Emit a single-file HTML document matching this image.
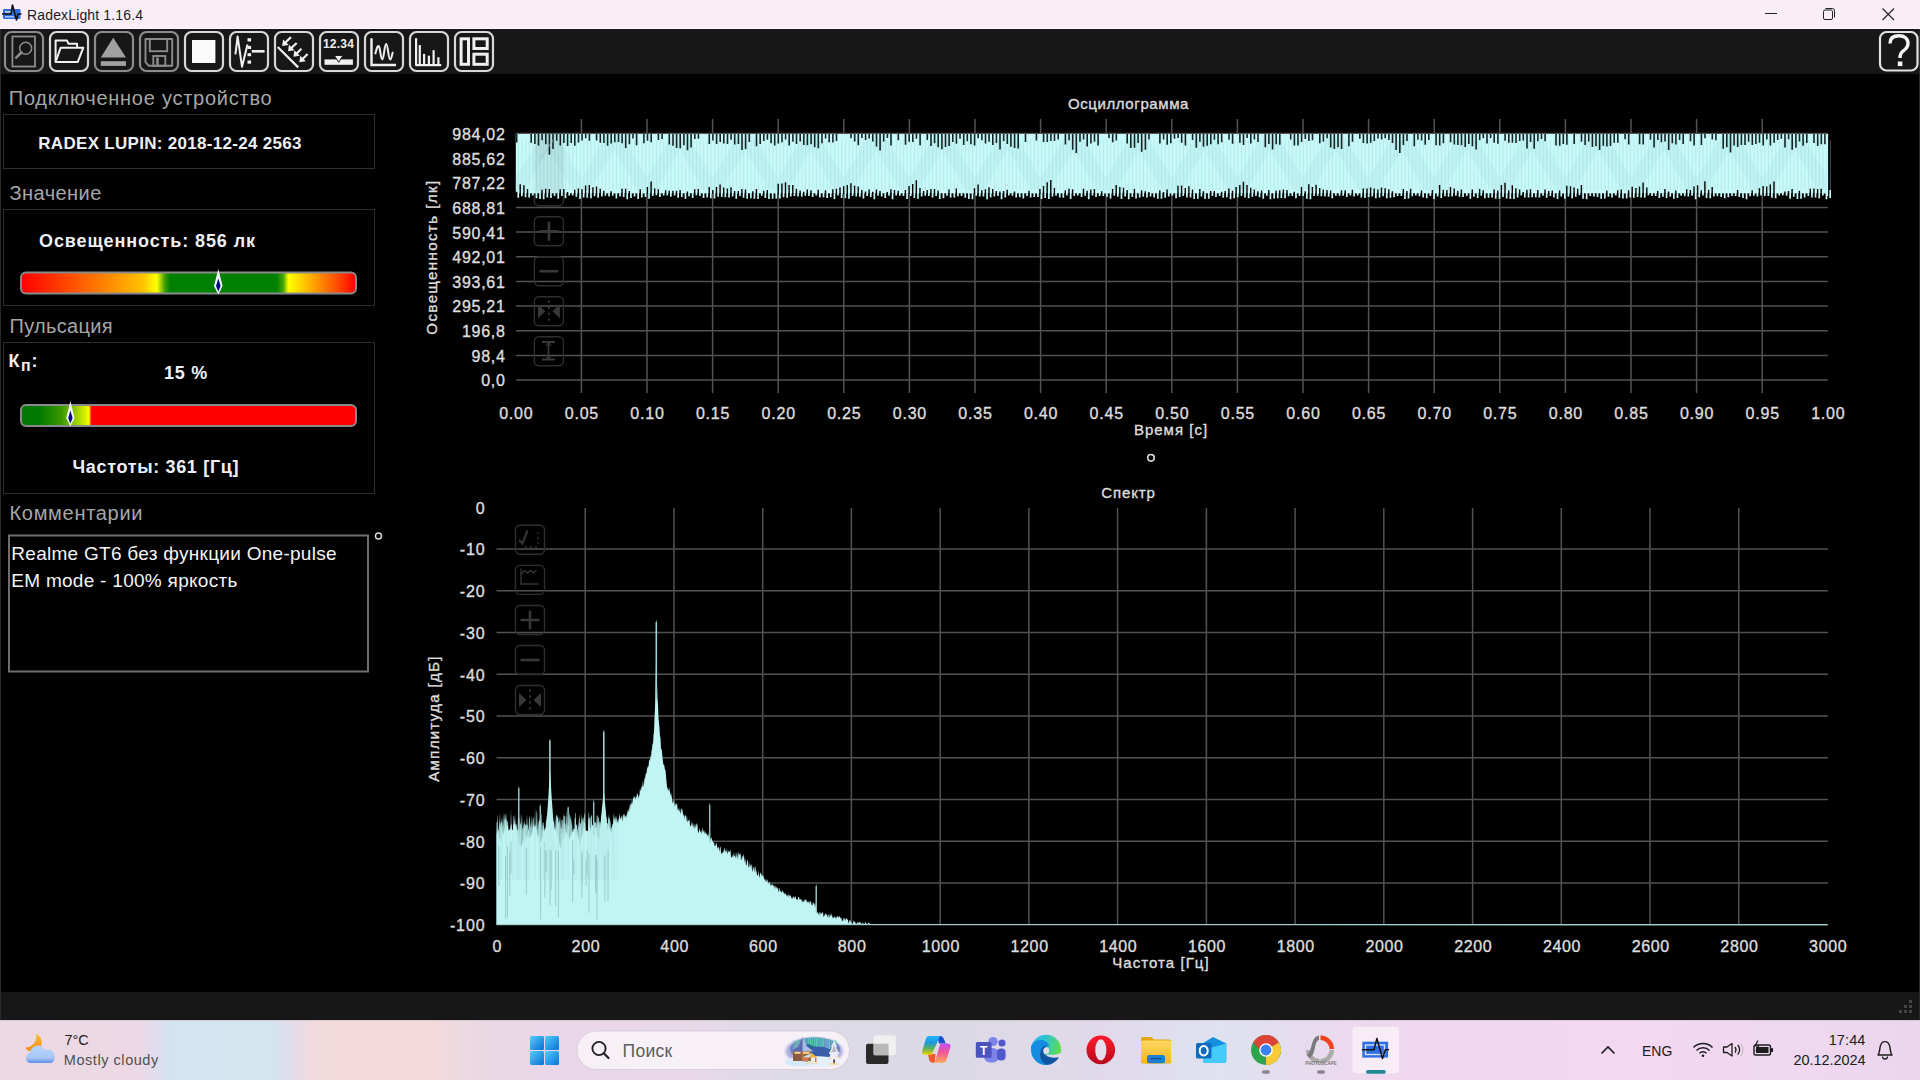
<!DOCTYPE html><html><head><meta charset="utf-8"><style>
html,body{margin:0;padding:0;width:1920px;height:1080px;overflow:hidden;background:#000;}
body{font-family:"Liberation Sans", sans-serif;position:relative;}
.a{position:absolute;}
svg text{font-family:"Liberation Sans",sans-serif;}
</style></head><body>
<div class="a" style="left:0;top:0;width:1920px;height:29px;background:#f9eef6;"></div>
<div class="a" style="left:0;top:28px;width:1920px;height:1px;background:#fdf7fb;"></div>
<div class="a" style="left:0;top:29px;width:1920px;height:45px;background:#171717;"></div>
<div class="a" style="left:0;top:992px;width:1920px;height:28px;background:#171717;"></div>
<div class="a" style="left:0;top:29px;width:1px;height:991px;background:#2a2a2a;"></div>
<div class="a" style="left:1919px;top:29px;width:1px;height:991px;background:#2a2a2a;"></div>
<svg class="a" style="left:0;top:0" width="1920" height="1080" viewBox="0 0 1920 1080">
<rect x="3" y="9" width="17.5" height="10" rx="1" fill="#2f6ee0"/>
<rect x="5" y="11" width="7" height="2" fill="#a8c4f5"/><rect x="5" y="16" width="9" height="1.5" fill="#a8c4f5"/>
<polyline points="2,14 11,14 12.5,5 16.5,20 18,14 21.5,14" fill="none" stroke="#111" stroke-width="1.6" stroke-linejoin="round"/>
<text x="27" y="19.5" font-size="14" fill="#1b1b1b" font-weight="normal" letter-spacing="0.15" text-anchor="start" >RadexLight 1.16.4</text>
<line x1="1765" y1="13.5" x2="1777" y2="13.5" stroke="#222" stroke-width="1"/>
<rect x="1823.5" y="10" width="9" height="9.5" rx="1.5" fill="none" stroke="#222" stroke-width="1"/>
<path d="M1825.5,8.5 h7 a2,2 0 0 1 2,2 v7" fill="none" stroke="#222" stroke-width="1"/>
<path d="M1882.5,8.5 L1894,20 M1894,8.5 L1882.5,20" stroke="#222" stroke-width="1.1"/>
<g transform="translate(4,31)"><rect x="1" y="1" width="38" height="39" rx="6.5" fill="#171717" stroke="#8c8c8c" stroke-width="2.2"/><rect x="8.4" y="5.5" width="22.6" height="30" fill="none" stroke="#8c8c8c" stroke-width="1.8"/><circle cx="21.7" cy="17.2" r="6" fill="none" stroke="#8c8c8c" stroke-width="1.5"/><line x1="17.4" y1="21.5" x2="12.2" y2="26.7" stroke="#8c8c8c" stroke-width="2.6" stroke-linecap="round"/></g>
<g transform="translate(49,31)"><rect x="1" y="1" width="38" height="39" rx="6.5" fill="#171717" stroke="#d8d8d8" stroke-width="2.2"/><path d="M6.6,30.9 V9.4 H17.9 L19.5,12.7 H28.1 V16.7" fill="none" stroke="#f2f2f2" stroke-width="2" stroke-linejoin="round"/><path d="M11.7,16.7 H34.3 L28.8,30.9 H6.6 Z" fill="none" stroke="#f2f2f2" stroke-width="2" stroke-linejoin="round"/></g>
<g transform="translate(94,31)"><rect x="1" y="1" width="38" height="39" rx="6.5" fill="#171717" stroke="#8c8c8c" stroke-width="2.2"/><path d="M19.2,6.8 L32,26.5 H6.8 Z" fill="#a0a0a0"/><rect x="6.8" y="30.2" width="25.2" height="4.7" fill="#a0a0a0"/></g>
<g transform="translate(139,31)"><rect x="1" y="1" width="38" height="39" rx="6.5" fill="#171717" stroke="#8c8c8c" stroke-width="2.2"/><path d="M6.5,8 H33.2 V34.8 H9.8 L6.5,31.2 Z" fill="none" stroke="#8c8c8c" stroke-width="1.9" stroke-linejoin="round"/><rect x="10.8" y="8" width="17.4" height="12.2" fill="none" stroke="#8c8c8c" stroke-width="1.9"/><rect x="14.3" y="25" width="12" height="9.8" fill="none" stroke="#8c8c8c" stroke-width="1.9"/><rect x="17.2" y="26.5" width="2.6" height="8" fill="#8c8c8c"/></g>
<g transform="translate(184,31)"><rect x="1" y="1" width="38" height="39" rx="6.5" fill="#171717" stroke="#d8d8d8" stroke-width="2.2"/><rect x="8" y="9" width="23.4" height="23" fill="#fafafa"/></g>
<g transform="translate(229,31)"><rect x="1" y="1" width="38" height="39" rx="6.5" fill="#171717" stroke="#d8d8d8" stroke-width="2.2"/><polyline points="6.4,23.3 8.6,5.5 13,35.7 18.5,13.4" fill="none" stroke="#f0f0f0" stroke-width="2" stroke-linejoin="round"/><rect x="18.5" y="7.2" width="3.6" height="3.3" fill="#f0f0f0"/><rect x="18.5" y="14.9" width="3.6" height="3.1" fill="#f0f0f0"/><rect x="18.5" y="22.2" width="3.6" height="3" fill="#f0f0f0"/><rect x="18.5" y="29.5" width="3.6" height="3.2" fill="#f0f0f0"/><rect x="22.8" y="19" width="12.8" height="2.6" fill="#f0f0f0"/></g>
<g transform="translate(274,31)"><rect x="1" y="1" width="38" height="39" rx="6.5" fill="#171717" stroke="#d8d8d8" stroke-width="2.2"/><line x1="3.7" y1="16" x2="24.2" y2="36.4" stroke="#f0f0f0" stroke-width="2.2"/><line x1="16.9" y1="6.1" x2="10.6" y2="12.4" stroke="#f0f0f0" stroke-width="2.2"/><path d="M8.1,14.9 L9.1,8.4 L14.6,13.9 Z" fill="#f0f0f0"/><line x1="22.7" y1="12" x2="16.5" y2="17.8" stroke="#f0f0f0" stroke-width="2.2"/><path d="M14,20.3 L15,13.8 L20.5,19.3 Z" fill="#f0f0f0"/><line x1="27.4" y1="17.8" x2="21.9" y2="23.3" stroke="#f0f0f0" stroke-width="2.2"/><path d="M19.4,25.8 L20.4,19.3 L25.9,24.8 Z" fill="#f0f0f0"/><line x1="33.6" y1="22.9" x2="27.8" y2="28.8" stroke="#f0f0f0" stroke-width="2.2"/><path d="M25.3,31.3 L26.3,24.8 L31.8,30.3 Z" fill="#f0f0f0"/></g>
<g transform="translate(319,31)"><rect x="1" y="1" width="38" height="39" rx="6.5" fill="#171717" stroke="#d8d8d8" stroke-width="2.2"/><text x="19.5" y="16.7" font-size="12" font-weight="bold" fill="#f0f0f0" text-anchor="middle" letter-spacing="0.2">12.34</text><rect x="5.5" y="28.4" width="28.4" height="5.4" fill="#f0f0f0"/><path d="M15.3,24.4 H24 L19.7,31.3 Z" fill="#f0f0f0" stroke="#171717" stroke-width="1"/></g>
<g transform="translate(364,31)"><rect x="1" y="1" width="38" height="39" rx="6.5" fill="#171717" stroke="#d8d8d8" stroke-width="2.2"/><polyline points="7.5,7.2 7.5,34 32,34" fill="none" stroke="#f0f0f0" stroke-width="2.4"/><path d="M11.2,23.3 C12.5,18 13.5,14 14.8,15.2 C16.5,17 16.5,28.4 18.3,28.4 C20,28.4 20.3,13 22.2,13 C24,13 24.3,28.4 26.1,28.4 C27.5,28.4 28,23 29,21" fill="none" stroke="#f0f0f0" stroke-width="2"/></g>
<g transform="translate(409,31)"><rect x="1" y="1" width="38" height="39" rx="6.5" fill="#171717" stroke="#d8d8d8" stroke-width="2.2"/><rect x="6" y="7.2" width="2.2" height="27.000000000000004" fill="#f0f0f0"/><rect x="9.7" y="14.1" width="2.2" height="20.1" fill="#f0f0f0"/><rect x="14" y="22.9" width="2.2" height="11.300000000000004" fill="#f0f0f0"/><rect x="18.8" y="24.7" width="2.2" height="9.500000000000004" fill="#f0f0f0"/><rect x="23.5" y="19.2" width="2.2" height="15.000000000000004" fill="#f0f0f0"/><rect x="28.3" y="26.2" width="2.2" height="8.000000000000004" fill="#f0f0f0"/><rect x="6.3" y="33" width="25.9" height="2.2" fill="#f0f0f0"/></g>
<g transform="translate(454,31)"><rect x="1" y="1" width="38" height="39" rx="6.5" fill="#171717" stroke="#d8d8d8" stroke-width="2.2"/><rect x="7.1" y="7.8" width="7.4" height="25.5" fill="none" stroke="#f0f0f0" stroke-width="3"/><rect x="19.9" y="7.8" width="13.3" height="9.7" fill="none" stroke="#f0f0f0" stroke-width="3"/><rect x="19.9" y="23.2" width="13.3" height="10.1" fill="none" stroke="#f0f0f0" stroke-width="3"/></g>
<g transform="translate(1879,31)"><rect x="1" y="1" width="37.5" height="38.5" rx="6.5" fill="#171717" stroke="#e0e0e0" stroke-width="2.2"/><path d="M11,12.5 C11,6.5 15,4.8 20,4.8 C25.5,4.8 29,7.8 29,12.5 C29,17 25.5,19 23.5,20.5 C21.5,22 21,23.5 21,27" fill="none" stroke="#f4f4f4" stroke-width="3.4"/><rect x="18.8" y="30.5" width="4.6" height="4.6" fill="#f4f4f4"/></g>
<text x="8.8" y="105" font-size="20" fill="#a6a6a6" font-weight="normal" letter-spacing="0.75" text-anchor="start" >Подключенное устройство</text>
<rect x="3.5" y="114.5" width="371" height="54" fill="none" stroke="#2e2e2e" stroke-width="1"/>
<text x="38.3" y="149" font-size="17" fill="#eef0f6" font-weight="bold" letter-spacing="0.3" text-anchor="start" >RADEX LUPIN: 2018-12-24 2563</text>
<text x="9.5" y="200" font-size="20" fill="#a6a6a6" font-weight="normal" letter-spacing="0.45" text-anchor="start" >Значение</text>
<rect x="3.5" y="209.5" width="371" height="96" fill="none" stroke="#2e2e2e" stroke-width="1"/>
<text x="39" y="247.3" font-size="18" fill="#eef0f6" font-weight="bold" letter-spacing="0.9" text-anchor="start" >Освещенность: 856 лк</text>
<defs><linearGradient id="g1" x1="22" x2="355" gradientUnits="userSpaceOnUse"><stop offset="0" stop-color="#ff0000"/><stop offset="0.2" stop-color="#ff6a00"/><stop offset="0.36" stop-color="#ffc000"/><stop offset="0.405" stop-color="#ffff00"/><stop offset="0.43" stop-color="#3a9a00"/><stop offset="0.445" stop-color="#008000"/><stop offset="0.765" stop-color="#008000"/><stop offset="0.785" stop-color="#4aa800"/><stop offset="0.8" stop-color="#ffff00"/><stop offset="0.84" stop-color="#ffd000"/><stop offset="0.96" stop-color="#ff3a00"/><stop offset="1" stop-color="#ff0000"/></linearGradient><linearGradient id="g2" x1="22" x2="355" gradientUnits="userSpaceOnUse"><stop offset="0" stop-color="#007800"/><stop offset="0.05" stop-color="#007800"/><stop offset="0.12" stop-color="#3c9a00"/><stop offset="0.19" stop-color="#d8f000"/><stop offset="0.201" stop-color="#ffff00"/><stop offset="0.205" stop-color="#ff8000"/><stop offset="0.209" stop-color="#ff0000"/><stop offset="1" stop-color="#ff0000"/></linearGradient></defs>
<rect x="21" y="272.5" width="335" height="21" rx="5" fill="url(#g1)" stroke="#8a8a8a" stroke-width="2"/>
<path d="M218.3,269 L222.6,286 L218.3,294.5 L214,286 Z" fill="#f4f4ff" /><path d="M218.3,278.5 L220.6,286 L218.3,291.5 L216,286 Z" fill="#000a80"/>
<text x="9.5" y="332.8" font-size="20" fill="#a6a6a6" font-weight="normal" letter-spacing="0.3" text-anchor="start" >Пульсация</text>
<rect x="3.5" y="342.5" width="371" height="151" fill="none" stroke="#2e2e2e" stroke-width="1"/>
<text x="8.5" y="367.3" font-size="18" fill="#eef0f6" font-weight="bold" letter-spacing="0" text-anchor="start" >К</text>
<text x="21" y="371.3" font-size="16" fill="#eef0f6" font-weight="bold" letter-spacing="0" text-anchor="start" >п</text>
<text x="31.5" y="367.3" font-size="18" fill="#eef0f6" font-weight="bold" letter-spacing="0" text-anchor="start" >:</text>
<text x="164" y="379.3" font-size="18" fill="#eef0f6" font-weight="bold" letter-spacing="0.75" text-anchor="start" >15 %</text>
<rect x="21" y="405" width="335" height="21" rx="5" fill="url(#g2)" stroke="#8a8a8a" stroke-width="2"/>
<path d="M70.4,401 L74.6,418 L70.4,426.5 L66.2,418 Z" fill="#f4f4ff" /><path d="M70.4,410.5 L72.6,418 L70.4,423.5 L68.2,418 Z" fill="#000a80"/>
<text x="72.5" y="472.8" font-size="18" fill="#eef0f6" font-weight="bold" letter-spacing="0.67" text-anchor="start" >Частоты: 361 [Гц]</text>
<text x="9.5" y="520" font-size="20" fill="#a6a6a6" font-weight="normal" letter-spacing="0.7" text-anchor="start" >Комментарии</text>
<rect x="9" y="535.5" width="359" height="136" fill="none" stroke="#6e6e6e" stroke-width="2"/>
<text x="11.3" y="559.5" font-size="19" fill="#f4f4f4" font-weight="normal" letter-spacing="0.28" text-anchor="start" >Realme GT6 без функции One-pulse</text>
<text x="11.3" y="587" font-size="19" fill="#f4f4f4" font-weight="normal" letter-spacing="0.28" text-anchor="start" >EM mode - 100% яркость</text>
<circle cx="378.5" cy="536" r="3" fill="none" stroke="#d8d8d8" stroke-width="1.5"/>
<text x="1128.5" y="108.8" font-size="15" fill="#dedede" font-weight="normal" letter-spacing="0.6" text-anchor="middle"  stroke="#dedede" stroke-width="0.35">Осциллограмма</text>
<line x1="515.8" y1="380.0" x2="1827.8" y2="380.0" stroke="#525252" stroke-width="1.5"/><line x1="515.8" y1="355.4" x2="1827.8" y2="355.4" stroke="#525252" stroke-width="1.5"/><line x1="515.8" y1="330.7" x2="1827.8" y2="330.7" stroke="#525252" stroke-width="1.5"/><line x1="515.8" y1="306.1" x2="1827.8" y2="306.1" stroke="#525252" stroke-width="1.5"/><line x1="515.8" y1="281.4" x2="1827.8" y2="281.4" stroke="#525252" stroke-width="1.5"/><line x1="515.8" y1="256.8" x2="1827.8" y2="256.8" stroke="#525252" stroke-width="1.5"/><line x1="515.8" y1="232.1" x2="1827.8" y2="232.1" stroke="#525252" stroke-width="1.5"/><line x1="515.8" y1="207.4" x2="1827.8" y2="207.4" stroke="#525252" stroke-width="1.5"/><line x1="515.8" y1="182.8" x2="1827.8" y2="182.8" stroke="#525252" stroke-width="1.5"/><line x1="515.8" y1="158.2" x2="1827.8" y2="158.2" stroke="#525252" stroke-width="1.5"/><line x1="515.8" y1="133.5" x2="1827.8" y2="133.5" stroke="#525252" stroke-width="1.5"/><line x1="581.4" y1="119" x2="581.4" y2="393" stroke="#525252" stroke-width="1.5"/><line x1="647.0" y1="119" x2="647.0" y2="393" stroke="#525252" stroke-width="1.5"/><line x1="712.6" y1="119" x2="712.6" y2="393" stroke="#525252" stroke-width="1.5"/><line x1="778.2" y1="119" x2="778.2" y2="393" stroke="#525252" stroke-width="1.5"/><line x1="843.8" y1="119" x2="843.8" y2="393" stroke="#525252" stroke-width="1.5"/><line x1="909.4" y1="119" x2="909.4" y2="393" stroke="#525252" stroke-width="1.5"/><line x1="975.0" y1="119" x2="975.0" y2="393" stroke="#525252" stroke-width="1.5"/><line x1="1040.6" y1="119" x2="1040.6" y2="393" stroke="#525252" stroke-width="1.5"/><line x1="1106.2" y1="119" x2="1106.2" y2="393" stroke="#525252" stroke-width="1.5"/><line x1="1171.8" y1="119" x2="1171.8" y2="393" stroke="#525252" stroke-width="1.5"/><line x1="1237.4" y1="119" x2="1237.4" y2="393" stroke="#525252" stroke-width="1.5"/><line x1="1303.0" y1="119" x2="1303.0" y2="393" stroke="#525252" stroke-width="1.5"/><line x1="1368.6" y1="119" x2="1368.6" y2="393" stroke="#525252" stroke-width="1.5"/><line x1="1434.2" y1="119" x2="1434.2" y2="393" stroke="#525252" stroke-width="1.5"/><line x1="1499.8" y1="119" x2="1499.8" y2="393" stroke="#525252" stroke-width="1.5"/><line x1="1565.4" y1="119" x2="1565.4" y2="393" stroke="#525252" stroke-width="1.5"/><line x1="1631.0" y1="119" x2="1631.0" y2="393" stroke="#525252" stroke-width="1.5"/><line x1="1696.6" y1="119" x2="1696.6" y2="393" stroke="#525252" stroke-width="1.5"/><line x1="1762.2" y1="119" x2="1762.2" y2="393" stroke="#525252" stroke-width="1.5"/>
<text x="505.5" y="386.4" font-size="16" fill="#dedede" font-weight="normal" letter-spacing="0.7" text-anchor="end"  stroke="#dedede" stroke-width="0.35">0,0</text>
<text x="505.5" y="361.75" font-size="16" fill="#dedede" font-weight="normal" letter-spacing="0.7" text-anchor="end"  stroke="#dedede" stroke-width="0.35">98,4</text>
<text x="505.5" y="337.09999999999997" font-size="16" fill="#dedede" font-weight="normal" letter-spacing="0.7" text-anchor="end"  stroke="#dedede" stroke-width="0.35">196,8</text>
<text x="505.5" y="312.45" font-size="16" fill="#dedede" font-weight="normal" letter-spacing="0.7" text-anchor="end"  stroke="#dedede" stroke-width="0.35">295,21</text>
<text x="505.5" y="287.79999999999995" font-size="16" fill="#dedede" font-weight="normal" letter-spacing="0.7" text-anchor="end"  stroke="#dedede" stroke-width="0.35">393,61</text>
<text x="505.5" y="263.15" font-size="16" fill="#dedede" font-weight="normal" letter-spacing="0.7" text-anchor="end"  stroke="#dedede" stroke-width="0.35">492,01</text>
<text x="505.5" y="238.5" font-size="16" fill="#dedede" font-weight="normal" letter-spacing="0.7" text-anchor="end"  stroke="#dedede" stroke-width="0.35">590,41</text>
<text x="505.5" y="213.85" font-size="16" fill="#dedede" font-weight="normal" letter-spacing="0.7" text-anchor="end"  stroke="#dedede" stroke-width="0.35">688,81</text>
<text x="505.5" y="189.20000000000002" font-size="16" fill="#dedede" font-weight="normal" letter-spacing="0.7" text-anchor="end"  stroke="#dedede" stroke-width="0.35">787,22</text>
<text x="505.5" y="164.55" font-size="16" fill="#dedede" font-weight="normal" letter-spacing="0.7" text-anchor="end"  stroke="#dedede" stroke-width="0.35">885,62</text>
<text x="505.5" y="139.9" font-size="16" fill="#dedede" font-weight="normal" letter-spacing="0.7" text-anchor="end"  stroke="#dedede" stroke-width="0.35">984,02</text>
<text x="516.3" y="418.75" font-size="16" fill="#dedede" font-weight="normal" letter-spacing="0.8" text-anchor="middle"  stroke="#dedede" stroke-width="0.35">0.00</text>
<text x="581.9" y="418.75" font-size="16" fill="#dedede" font-weight="normal" letter-spacing="0.8" text-anchor="middle"  stroke="#dedede" stroke-width="0.35">0.05</text>
<text x="647.5" y="418.75" font-size="16" fill="#dedede" font-weight="normal" letter-spacing="0.8" text-anchor="middle"  stroke="#dedede" stroke-width="0.35">0.10</text>
<text x="713.0999999999999" y="418.75" font-size="16" fill="#dedede" font-weight="normal" letter-spacing="0.8" text-anchor="middle"  stroke="#dedede" stroke-width="0.35">0.15</text>
<text x="778.6999999999999" y="418.75" font-size="16" fill="#dedede" font-weight="normal" letter-spacing="0.8" text-anchor="middle"  stroke="#dedede" stroke-width="0.35">0.20</text>
<text x="844.3" y="418.75" font-size="16" fill="#dedede" font-weight="normal" letter-spacing="0.8" text-anchor="middle"  stroke="#dedede" stroke-width="0.35">0.25</text>
<text x="909.9" y="418.75" font-size="16" fill="#dedede" font-weight="normal" letter-spacing="0.8" text-anchor="middle"  stroke="#dedede" stroke-width="0.35">0.30</text>
<text x="975.5" y="418.75" font-size="16" fill="#dedede" font-weight="normal" letter-spacing="0.8" text-anchor="middle"  stroke="#dedede" stroke-width="0.35">0.35</text>
<text x="1041.1" y="418.75" font-size="16" fill="#dedede" font-weight="normal" letter-spacing="0.8" text-anchor="middle"  stroke="#dedede" stroke-width="0.35">0.40</text>
<text x="1106.6999999999998" y="418.75" font-size="16" fill="#dedede" font-weight="normal" letter-spacing="0.8" text-anchor="middle"  stroke="#dedede" stroke-width="0.35">0.45</text>
<text x="1172.3" y="418.75" font-size="16" fill="#dedede" font-weight="normal" letter-spacing="0.8" text-anchor="middle"  stroke="#dedede" stroke-width="0.35">0.50</text>
<text x="1237.9" y="418.75" font-size="16" fill="#dedede" font-weight="normal" letter-spacing="0.8" text-anchor="middle"  stroke="#dedede" stroke-width="0.35">0.55</text>
<text x="1303.5" y="418.75" font-size="16" fill="#dedede" font-weight="normal" letter-spacing="0.8" text-anchor="middle"  stroke="#dedede" stroke-width="0.35">0.60</text>
<text x="1369.1" y="418.75" font-size="16" fill="#dedede" font-weight="normal" letter-spacing="0.8" text-anchor="middle"  stroke="#dedede" stroke-width="0.35">0.65</text>
<text x="1434.6999999999998" y="418.75" font-size="16" fill="#dedede" font-weight="normal" letter-spacing="0.8" text-anchor="middle"  stroke="#dedede" stroke-width="0.35">0.70</text>
<text x="1500.3" y="418.75" font-size="16" fill="#dedede" font-weight="normal" letter-spacing="0.8" text-anchor="middle"  stroke="#dedede" stroke-width="0.35">0.75</text>
<text x="1565.8999999999999" y="418.75" font-size="16" fill="#dedede" font-weight="normal" letter-spacing="0.8" text-anchor="middle"  stroke="#dedede" stroke-width="0.35">0.80</text>
<text x="1631.5" y="418.75" font-size="16" fill="#dedede" font-weight="normal" letter-spacing="0.8" text-anchor="middle"  stroke="#dedede" stroke-width="0.35">0.85</text>
<text x="1697.1" y="418.75" font-size="16" fill="#dedede" font-weight="normal" letter-spacing="0.8" text-anchor="middle"  stroke="#dedede" stroke-width="0.35">0.90</text>
<text x="1762.7" y="418.75" font-size="16" fill="#dedede" font-weight="normal" letter-spacing="0.8" text-anchor="middle"  stroke="#dedede" stroke-width="0.35">0.95</text>
<text x="1828.3" y="418.75" font-size="16" fill="#dedede" font-weight="normal" letter-spacing="0.8" text-anchor="middle"  stroke="#dedede" stroke-width="0.35">1.00</text>
<text x="1171" y="435.3" font-size="15" fill="#dedede" font-weight="normal" letter-spacing="1.0" text-anchor="middle"  stroke="#dedede" stroke-width="0.35">Время [с]</text>
<text x="0" y="0" font-size="15" fill="#dedede" font-weight="normal" letter-spacing="1.45" text-anchor="middle" transform="translate(436.5,257) rotate(-90)" stroke="#dedede" stroke-width="0.35">Освещенность [лк]</text>
<circle cx="1151" cy="457.8" r="3.3" fill="none" stroke="#d8d8d8" stroke-width="1.6"/>
<rect x="534.4" y="176.7" width="29" height="29" rx="4.5" fill="none" stroke="#2e2e2e" stroke-width="1.4"/><rect x="534.4" y="216.7" width="29" height="29" rx="4.5" fill="none" stroke="#2e2e2e" stroke-width="1.4"/><rect x="534.4" y="256.7" width="29" height="29" rx="4.5" fill="none" stroke="#2e2e2e" stroke-width="1.4"/><rect x="534.4" y="296.7" width="29" height="29" rx="4.5" fill="none" stroke="#2e2e2e" stroke-width="1.4"/><rect x="534.4" y="336.7" width="29" height="29" rx="4.5" fill="none" stroke="#2e2e2e" stroke-width="1.4"/>
<path d="M539.4,231.2 h19 M548.9,221.7 v19" stroke="#383838" stroke-width="2.6"/><path d="M539.4,271.2 h19" stroke="#383838" stroke-width="2.6"/><path d="M537.9,304.2 L545.4,311.2 L537.9,318.2 Z M559.9,304.2 L552.4,311.2 L559.9,318.2 Z" fill="#383838"/><rect x="547.9" y="300.7" width="2" height="2" fill="#383838"/><rect x="547.9" y="306.7" width="2" height="2" fill="#383838"/><rect x="547.9" y="312.7" width="2" height="2" fill="#383838"/><rect x="547.9" y="318.7" width="2" height="2" fill="#383838"/>
<path d="M542,342 h13 M542,359.5 h13 M548.5,343 v16" stroke="#383838" stroke-width="1.8"/><path d="M546,346 l2.5,-3.5 l2.5,3.5 M546,355.5 l2.5,3.5 l2.5,-3.5" fill="none" stroke="#383838" stroke-width="1.2"/>
<rect x="515.8" y="134" width="1312" height="59.3" fill="#c8fafa"/>
<clipPath id="bandclip"><rect x="515.8" y="134" width="1312" height="60"/></clipPath>
<polyline points="515.8,192 548.6,136 581.4,192 614.2,136 647.0,192 679.8,136 712.6,192 745.4,136 778.2,192 811.0,136 843.8,192 876.6,136 909.4,192 942.2,136 975.0,192 1007.8,136 1040.6,192 1073.4,136 1106.2,192 1139.0,136 1171.8,192 1204.6,136 1237.4,192 1270.2,136 1303.0,192 1335.8,136 1368.6,192 1401.4,136 1434.2,192 1467.0,136 1499.8,192 1532.6,136 1565.4,192 1598.2,136 1631.0,192 1663.8,136 1696.6,192 1729.4,136 1762.2,192 1795.0,136 1827.8,192 1860.6,136 1893.4,192" fill="none" stroke="#a6dcdc" stroke-width="14" opacity="0.22" clip-path="url(#bandclip)"/>
<path d="M518.4,140v50M522.0,140v50M525.7,140v50M529.3,140v50M532.9,140v50M536.6,140v50M540.2,140v50M543.8,140v50M547.5,140v50M551.1,140v50M554.7,140v50M558.4,140v50M562.0,140v50M565.6,140v50M569.3,140v50M572.9,140v50M576.5,140v50M580.2,140v50M583.8,140v50M587.4,140v50M591.1,140v50M594.7,140v50M598.3,140v50M602.0,140v50M605.6,140v50M609.2,140v50M612.9,140v50M616.5,140v50M620.2,140v50M623.8,140v50M627.4,140v50M631.1,140v50M634.7,140v50M638.3,140v50M642.0,140v50M645.6,140v50M649.2,140v50M652.9,140v50M656.5,140v50M660.1,140v50M663.8,140v50M667.4,140v50M671.0,140v50M674.7,140v50M678.3,140v50M681.9,140v50M685.6,140v50M689.2,140v50M692.8,140v50M696.5,140v50M700.1,140v50M703.7,140v50M707.4,140v50M711.0,140v50M714.6,140v50M718.3,140v50M721.9,140v50M725.5,140v50M729.2,140v50M732.8,140v50M736.4,140v50M740.1,140v50M743.7,140v50M747.3,140v50M751.0,140v50M754.6,140v50M758.2,140v50M761.9,140v50M765.5,140v50M769.1,140v50M772.8,140v50M776.4,140v50M780.0,140v50M783.7,140v50M787.3,140v50M790.9,140v50M794.6,140v50M798.2,140v50M801.9,140v50M805.5,140v50M809.1,140v50M812.8,140v50M816.4,140v50M820.0,140v50M823.7,140v50M827.3,140v50M830.9,140v50M834.6,140v50M838.2,140v50M841.8,140v50M845.5,140v50M849.1,140v50M852.7,140v50M856.4,140v50M860.0,140v50M863.6,140v50M867.3,140v50M870.9,140v50M874.5,140v50M878.2,140v50M881.8,140v50M885.4,140v50M889.1,140v50M892.7,140v50M896.3,140v50M900.0,140v50M903.6,140v50M907.2,140v50M910.9,140v50M914.5,140v50M918.1,140v50M921.8,140v50M925.4,140v50M929.0,140v50M932.7,140v50M936.3,140v50M939.9,140v50M943.6,140v50M947.2,140v50M950.8,140v50M954.5,140v50M958.1,140v50M961.7,140v50M965.4,140v50M969.0,140v50M972.6,140v50M976.3,140v50M979.9,140v50M983.6,140v50M987.2,140v50M990.8,140v50M994.5,140v50M998.1,140v50M1001.7,140v50M1005.4,140v50M1009.0,140v50M1012.6,140v50M1016.3,140v50M1019.9,140v50M1023.5,140v50M1027.2,140v50M1030.8,140v50M1034.4,140v50M1038.1,140v50M1041.7,140v50M1045.3,140v50M1049.0,140v50M1052.6,140v50M1056.2,140v50M1059.9,140v50M1063.5,140v50M1067.1,140v50M1070.8,140v50M1074.4,140v50M1078.0,140v50M1081.7,140v50M1085.3,140v50M1088.9,140v50M1092.6,140v50M1096.2,140v50M1099.8,140v50M1103.5,140v50M1107.1,140v50M1110.7,140v50M1114.4,140v50M1118.0,140v50M1121.6,140v50M1125.3,140v50M1128.9,140v50M1132.5,140v50M1136.2,140v50M1139.8,140v50M1143.4,140v50M1147.1,140v50M1150.7,140v50M1154.3,140v50M1158.0,140v50M1161.6,140v50M1165.3,140v50M1168.9,140v50M1172.5,140v50M1176.2,140v50M1179.8,140v50M1183.4,140v50M1187.1,140v50M1190.7,140v50M1194.3,140v50M1198.0,140v50M1201.6,140v50M1205.2,140v50M1208.9,140v50M1212.5,140v50M1216.1,140v50M1219.8,140v50M1223.4,140v50M1227.0,140v50M1230.7,140v50M1234.3,140v50M1237.9,140v50M1241.6,140v50M1245.2,140v50M1248.8,140v50M1252.5,140v50M1256.1,140v50M1259.7,140v50M1263.4,140v50M1267.0,140v50M1270.6,140v50M1274.3,140v50M1277.9,140v50M1281.5,140v50M1285.2,140v50M1288.8,140v50M1292.4,140v50M1296.1,140v50M1299.7,140v50M1303.3,140v50M1307.0,140v50M1310.6,140v50M1314.2,140v50M1317.9,140v50M1321.5,140v50M1325.1,140v50M1328.8,140v50M1332.4,140v50M1336.0,140v50M1339.7,140v50M1343.3,140v50M1347.0,140v50M1350.6,140v50M1354.2,140v50M1357.9,140v50M1361.5,140v50M1365.1,140v50M1368.8,140v50M1372.4,140v50M1376.0,140v50M1379.7,140v50M1383.3,140v50M1386.9,140v50M1390.6,140v50M1394.2,140v50M1397.8,140v50M1401.5,140v50M1405.1,140v50M1408.7,140v50M1412.4,140v50M1416.0,140v50M1419.6,140v50M1423.3,140v50M1426.9,140v50M1430.5,140v50M1434.2,140v50M1437.8,140v50M1441.4,140v50M1445.1,140v50M1448.7,140v50M1452.3,140v50M1456.0,140v50M1459.6,140v50M1463.2,140v50M1466.9,140v50M1470.5,140v50M1474.1,140v50M1477.8,140v50M1481.4,140v50M1485.0,140v50M1488.7,140v50M1492.3,140v50M1495.9,140v50M1499.6,140v50M1503.2,140v50M1506.8,140v50M1510.5,140v50M1514.1,140v50M1517.8,140v50M1521.4,140v50M1525.0,140v50M1528.7,140v50M1532.3,140v50M1535.9,140v50M1539.6,140v50M1543.2,140v50M1546.8,140v50M1550.5,140v50M1554.1,140v50M1557.7,140v50M1561.4,140v50M1565.0,140v50M1568.6,140v50M1572.3,140v50M1575.9,140v50M1579.5,140v50M1583.2,140v50M1586.8,140v50M1590.4,140v50M1594.1,140v50M1597.7,140v50M1601.3,140v50M1605.0,140v50M1608.6,140v50M1612.2,140v50M1615.9,140v50M1619.5,140v50M1623.1,140v50M1626.8,140v50M1630.4,140v50M1634.0,140v50M1637.7,140v50M1641.3,140v50M1644.9,140v50M1648.6,140v50M1652.2,140v50M1655.8,140v50M1659.5,140v50M1663.1,140v50M1666.7,140v50M1670.4,140v50M1674.0,140v50M1677.6,140v50M1681.3,140v50M1684.9,140v50M1688.5,140v50M1692.2,140v50M1695.8,140v50M1699.4,140v50M1703.1,140v50M1706.7,140v50M1710.4,140v50M1714.0,140v50M1717.6,140v50M1721.3,140v50M1724.9,140v50M1728.5,140v50M1732.2,140v50M1735.8,140v50M1739.4,140v50M1743.1,140v50M1746.7,140v50M1750.3,140v50M1754.0,140v50M1757.6,140v50M1761.2,140v50M1764.9,140v50M1768.5,140v50M1772.1,140v50M1775.8,140v50M1779.4,140v50M1783.0,140v50M1786.7,140v50M1790.3,140v50M1793.9,140v50M1797.6,140v50M1801.2,140v50M1804.8,140v50M1808.5,140v50M1812.1,140v50M1815.7,140v50M1819.4,140v50M1823.0,140v50M1826.6,140v50M1830.3,140v50" stroke="#9fd4d4" stroke-width="0.9" opacity="0.45"/>
<path d="M517.4,190h1.7v7.7h-1.7zM521.0,190h1.7v6.3h-1.7zM524.7,190h1.7v7.2h-1.7zM528.3,190h1.7v7.4h-1.7zM531.9,190h1.7v5.4h-1.7zM535.6,190h1.7v8.2h-1.7zM539.2,190h1.7v9.0h-1.7zM542.8,190h1.7v9.2h-1.7zM546.5,190h1.7v7.6h-1.7zM550.1,190h1.7v8.0h-1.7zM553.7,190h1.7v6.1h-1.7zM557.4,190h1.7v8.7h-1.7zM561.0,190h1.7v5.9h-1.7zM564.6,190h1.7v8.2h-1.7zM568.3,190h1.7v5.6h-1.7zM571.9,190h1.7v5.5h-1.7zM575.5,190h1.7v6.8h-1.7zM579.2,190h1.7v9.1h-1.7zM582.8,190h1.7v7.4h-1.7zM586.4,190h1.7v7.8h-1.7zM590.1,190h1.7v8.3h-1.7zM593.7,190h1.7v6.3h-1.7zM597.3,190h1.7v7.7h-1.7zM601.0,190h1.7v6.5h-1.7zM604.6,190h1.7v5.7h-1.7zM608.2,190h1.7v6.6h-1.7zM611.9,190h1.7v5.8h-1.7zM615.5,190h1.7v8.5h-1.7zM619.2,190h1.7v6.5h-1.7zM622.8,190h1.7v7.0h-1.7zM626.4,190h1.7v9.2h-1.7zM630.1,190h1.7v8.0h-1.7zM633.7,190h1.7v6.4h-1.7zM637.3,190h1.7v9.0h-1.7zM641.0,190h1.7v7.6h-1.7zM644.6,190h1.7v7.0h-1.7zM648.2,190h1.7v8.7h-1.7zM651.9,190h1.7v6.0h-1.7zM655.5,190h1.7v5.3h-1.7zM659.1,190h1.7v7.0h-1.7zM662.8,190h1.7v5.6h-1.7zM666.4,190h1.7v5.6h-1.7zM670.0,190h1.7v6.7h-1.7zM673.7,190h1.7v5.6h-1.7zM677.3,190h1.7v7.8h-1.7zM680.9,190h1.7v7.1h-1.7zM684.6,190h1.7v8.8h-1.7zM688.2,190h1.7v6.3h-1.7zM691.8,190h1.7v8.0h-1.7zM695.5,190h1.7v5.3h-1.7zM699.1,190h1.7v6.0h-1.7zM702.7,190h1.7v8.0h-1.7zM706.4,190h1.7v7.6h-1.7zM710.0,190h1.7v8.2h-1.7zM713.6,190h1.7v8.6h-1.7zM717.3,190h1.7v6.8h-1.7zM720.9,190h1.7v7.0h-1.7zM724.5,190h1.7v7.2h-1.7zM728.2,190h1.7v7.4h-1.7zM731.8,190h1.7v6.6h-1.7zM735.4,190h1.7v8.7h-1.7zM739.1,190h1.7v6.0h-1.7zM742.7,190h1.7v7.7h-1.7zM746.3,190h1.7v8.7h-1.7zM750.0,190h1.7v8.2h-1.7zM753.6,190h1.7v8.7h-1.7zM757.2,190h1.7v8.9h-1.7zM760.9,190h1.7v5.7h-1.7zM764.5,190h1.7v8.0h-1.7zM768.1,190h1.7v9.1h-1.7zM771.8,190h1.7v8.8h-1.7zM775.4,190h1.7v8.4h-1.7zM779.0,190h1.7v8.5h-1.7zM782.7,190h1.7v7.3h-1.7zM786.3,190h1.7v7.8h-1.7zM789.9,190h1.7v6.6h-1.7zM793.6,190h1.7v6.0h-1.7zM797.2,190h1.7v6.4h-1.7zM800.9,190h1.7v6.7h-1.7zM804.5,190h1.7v5.7h-1.7zM808.1,190h1.7v6.1h-1.7zM811.8,190h1.7v6.9h-1.7zM815.4,190h1.7v5.4h-1.7zM819.0,190h1.7v7.5h-1.7zM822.7,190h1.7v7.2h-1.7zM826.3,190h1.7v7.9h-1.7zM829.9,190h1.7v7.3h-1.7zM833.6,190h1.7v8.9h-1.7zM837.2,190h1.7v5.6h-1.7zM840.8,190h1.7v8.1h-1.7zM844.5,190h1.7v8.2h-1.7zM848.1,190h1.7v8.7h-1.7zM851.7,190h1.7v6.1h-1.7zM855.4,190h1.7v6.5h-1.7zM859.0,190h1.7v6.8h-1.7zM862.6,190h1.7v8.4h-1.7zM866.3,190h1.7v6.0h-1.7zM869.9,190h1.7v7.1h-1.7zM873.5,190h1.7v9.2h-1.7zM877.2,190h1.7v5.8h-1.7zM880.8,190h1.7v6.5h-1.7zM884.4,190h1.7v8.0h-1.7zM888.1,190h1.7v5.7h-1.7zM891.7,190h1.7v9.2h-1.7zM895.3,190h1.7v5.4h-1.7zM899.0,190h1.7v5.8h-1.7zM902.6,190h1.7v6.0h-1.7zM906.2,190h1.7v9.0h-1.7zM909.9,190h1.7v6.0h-1.7zM913.5,190h1.7v8.1h-1.7zM917.1,190h1.7v8.7h-1.7zM920.8,190h1.7v6.6h-1.7zM924.4,190h1.7v5.7h-1.7zM928.0,190h1.7v5.9h-1.7zM931.7,190h1.7v7.5h-1.7zM935.3,190h1.7v6.0h-1.7zM938.9,190h1.7v8.9h-1.7zM942.6,190h1.7v8.3h-1.7zM946.2,190h1.7v5.7h-1.7zM949.8,190h1.7v7.5h-1.7zM953.5,190h1.7v7.5h-1.7zM957.1,190h1.7v6.2h-1.7zM960.7,190h1.7v6.0h-1.7zM964.4,190h1.7v7.7h-1.7zM968.0,190h1.7v8.9h-1.7zM971.6,190h1.7v9.3h-1.7zM975.3,190h1.7v5.7h-1.7zM978.9,190h1.7v6.4h-1.7zM982.6,190h1.7v6.5h-1.7zM986.2,190h1.7v9.2h-1.7zM989.8,190h1.7v7.5h-1.7zM993.5,190h1.7v6.5h-1.7zM997.1,190h1.7v6.0h-1.7zM1000.7,190h1.7v9.2h-1.7zM1004.4,190h1.7v7.5h-1.7zM1008.0,190h1.7v5.5h-1.7zM1011.6,190h1.7v5.8h-1.7zM1015.3,190h1.7v7.5h-1.7zM1018.9,190h1.7v7.2h-1.7zM1022.5,190h1.7v8.6h-1.7zM1026.2,190h1.7v6.0h-1.7zM1029.8,190h1.7v7.5h-1.7zM1033.4,190h1.7v7.1h-1.7zM1037.1,190h1.7v6.9h-1.7zM1040.7,190h1.7v9.0h-1.7zM1044.3,190h1.7v8.1h-1.7zM1048.0,190h1.7v9.1h-1.7zM1051.6,190h1.7v6.6h-1.7zM1055.2,190h1.7v5.8h-1.7zM1058.9,190h1.7v7.4h-1.7zM1062.5,190h1.7v7.8h-1.7zM1066.1,190h1.7v5.6h-1.7zM1069.8,190h1.7v9.1h-1.7zM1073.4,190h1.7v5.9h-1.7zM1077.0,190h1.7v5.5h-1.7zM1080.7,190h1.7v6.9h-1.7zM1084.3,190h1.7v5.8h-1.7zM1087.9,190h1.7v9.2h-1.7zM1091.6,190h1.7v5.4h-1.7zM1095.2,190h1.7v7.1h-1.7zM1098.8,190h1.7v6.0h-1.7zM1102.5,190h1.7v6.0h-1.7zM1106.1,190h1.7v6.9h-1.7zM1109.7,190h1.7v8.5h-1.7zM1113.4,190h1.7v5.7h-1.7zM1117.0,190h1.7v6.8h-1.7zM1120.6,190h1.7v9.0h-1.7zM1124.3,190h1.7v6.4h-1.7zM1127.9,190h1.7v9.2h-1.7zM1131.5,190h1.7v7.1h-1.7zM1135.2,190h1.7v8.4h-1.7zM1138.8,190h1.7v7.5h-1.7zM1142.4,190h1.7v6.7h-1.7zM1146.1,190h1.7v7.6h-1.7zM1149.7,190h1.7v6.6h-1.7zM1153.3,190h1.7v7.4h-1.7zM1157.0,190h1.7v8.7h-1.7zM1160.6,190h1.7v8.8h-1.7zM1164.3,190h1.7v7.7h-1.7zM1167.9,190h1.7v6.4h-1.7zM1171.5,190h1.7v5.7h-1.7zM1175.2,190h1.7v8.3h-1.7zM1178.8,190h1.7v7.0h-1.7zM1182.4,190h1.7v6.1h-1.7zM1186.1,190h1.7v7.6h-1.7zM1189.7,190h1.7v7.5h-1.7zM1193.3,190h1.7v8.9h-1.7zM1197.0,190h1.7v8.7h-1.7zM1200.6,190h1.7v6.5h-1.7zM1204.2,190h1.7v9.0h-1.7zM1207.9,190h1.7v8.7h-1.7zM1211.5,190h1.7v6.0h-1.7zM1215.1,190h1.7v7.1h-1.7zM1218.8,190h1.7v6.0h-1.7zM1222.4,190h1.7v7.8h-1.7zM1226.0,190h1.7v7.3h-1.7zM1229.7,190h1.7v9.2h-1.7zM1233.3,190h1.7v8.2h-1.7zM1236.9,190h1.7v7.2h-1.7zM1240.6,190h1.7v6.1h-1.7zM1244.2,190h1.7v7.5h-1.7zM1247.8,190h1.7v8.2h-1.7zM1251.5,190h1.7v6.8h-1.7zM1255.1,190h1.7v6.1h-1.7zM1258.7,190h1.7v7.3h-1.7zM1262.4,190h1.7v8.8h-1.7zM1266.0,190h1.7v5.8h-1.7zM1269.6,190h1.7v9.2h-1.7zM1273.3,190h1.7v8.5h-1.7zM1276.9,190h1.7v8.3h-1.7zM1280.5,190h1.7v8.0h-1.7zM1284.2,190h1.7v8.3h-1.7zM1287.8,190h1.7v6.3h-1.7zM1291.4,190h1.7v6.1h-1.7zM1295.1,190h1.7v8.2h-1.7zM1298.7,190h1.7v5.9h-1.7zM1302.3,190h1.7v5.9h-1.7zM1306.0,190h1.7v8.8h-1.7zM1309.6,190h1.7v9.3h-1.7zM1313.2,190h1.7v6.0h-1.7zM1316.9,190h1.7v5.7h-1.7zM1320.5,190h1.7v6.2h-1.7zM1324.1,190h1.7v6.6h-1.7zM1327.8,190h1.7v6.7h-1.7zM1331.4,190h1.7v8.2h-1.7zM1335.0,190h1.7v5.7h-1.7zM1338.7,190h1.7v5.8h-1.7zM1342.3,190h1.7v5.8h-1.7zM1346.0,190h1.7v7.0h-1.7zM1349.6,190h1.7v5.5h-1.7zM1353.2,190h1.7v6.5h-1.7zM1356.9,190h1.7v5.5h-1.7zM1360.5,190h1.7v7.4h-1.7zM1364.1,190h1.7v8.0h-1.7zM1367.8,190h1.7v7.0h-1.7zM1371.4,190h1.7v6.5h-1.7zM1375.0,190h1.7v8.3h-1.7zM1378.7,190h1.7v7.6h-1.7zM1382.3,190h1.7v6.3h-1.7zM1385.9,190h1.7v8.3h-1.7zM1389.6,190h1.7v7.7h-1.7zM1393.2,190h1.7v7.3h-1.7zM1396.8,190h1.7v6.1h-1.7zM1400.5,190h1.7v5.9h-1.7zM1404.1,190h1.7v9.1h-1.7zM1407.7,190h1.7v8.6h-1.7zM1411.4,190h1.7v6.3h-1.7zM1415.0,190h1.7v5.6h-1.7zM1418.6,190h1.7v6.2h-1.7zM1422.3,190h1.7v7.5h-1.7zM1425.9,190h1.7v8.3h-1.7zM1429.5,190h1.7v5.9h-1.7zM1433.2,190h1.7v9.0h-1.7zM1436.8,190h1.7v6.5h-1.7zM1440.4,190h1.7v8.0h-1.7zM1444.1,190h1.7v6.3h-1.7zM1447.7,190h1.7v6.7h-1.7zM1451.3,190h1.7v6.6h-1.7zM1455.0,190h1.7v5.8h-1.7zM1458.6,190h1.7v6.8h-1.7zM1462.2,190h1.7v7.1h-1.7zM1465.9,190h1.7v6.0h-1.7zM1469.5,190h1.7v8.7h-1.7zM1473.1,190h1.7v6.8h-1.7zM1476.8,190h1.7v8.0h-1.7zM1480.4,190h1.7v5.7h-1.7zM1484.0,190h1.7v8.2h-1.7zM1487.7,190h1.7v7.8h-1.7zM1491.3,190h1.7v7.4h-1.7zM1494.9,190h1.7v8.7h-1.7zM1498.6,190h1.7v8.7h-1.7zM1502.2,190h1.7v7.1h-1.7zM1505.8,190h1.7v8.4h-1.7zM1509.5,190h1.7v9.1h-1.7zM1513.1,190h1.7v9.1h-1.7zM1516.8,190h1.7v7.4h-1.7zM1520.4,190h1.7v5.6h-1.7zM1524.0,190h1.7v7.5h-1.7zM1527.7,190h1.7v7.6h-1.7zM1531.3,190h1.7v7.3h-1.7zM1534.9,190h1.7v7.3h-1.7zM1538.6,190h1.7v7.5h-1.7zM1542.2,190h1.7v5.7h-1.7zM1545.8,190h1.7v7.8h-1.7zM1549.5,190h1.7v5.9h-1.7zM1553.1,190h1.7v7.6h-1.7zM1556.7,190h1.7v9.0h-1.7zM1560.4,190h1.7v6.5h-1.7zM1564.0,190h1.7v8.8h-1.7zM1567.6,190h1.7v6.4h-1.7zM1571.3,190h1.7v8.3h-1.7zM1574.9,190h1.7v6.8h-1.7zM1578.5,190h1.7v5.3h-1.7zM1582.2,190h1.7v8.8h-1.7zM1585.8,190h1.7v9.3h-1.7zM1589.4,190h1.7v6.1h-1.7zM1593.1,190h1.7v6.5h-1.7zM1596.7,190h1.7v7.0h-1.7zM1600.3,190h1.7v8.8h-1.7zM1604.0,190h1.7v8.6h-1.7zM1607.6,190h1.7v6.8h-1.7zM1611.2,190h1.7v7.6h-1.7zM1614.9,190h1.7v5.4h-1.7zM1618.5,190h1.7v7.8h-1.7zM1622.1,190h1.7v8.5h-1.7zM1625.8,190h1.7v8.4h-1.7zM1629.4,190h1.7v7.6h-1.7zM1633.0,190h1.7v7.8h-1.7zM1636.7,190h1.7v6.9h-1.7zM1640.3,190h1.7v7.5h-1.7zM1643.9,190h1.7v7.8h-1.7zM1647.6,190h1.7v5.3h-1.7zM1651.2,190h1.7v6.0h-1.7zM1654.8,190h1.7v6.1h-1.7zM1658.5,190h1.7v8.1h-1.7zM1662.1,190h1.7v6.7h-1.7zM1665.7,190h1.7v7.9h-1.7zM1669.4,190h1.7v6.7h-1.7zM1673.0,190h1.7v8.8h-1.7zM1676.6,190h1.7v8.1h-1.7zM1680.3,190h1.7v5.8h-1.7zM1683.9,190h1.7v6.2h-1.7zM1687.5,190h1.7v6.4h-1.7zM1691.2,190h1.7v5.8h-1.7zM1694.8,190h1.7v9.2h-1.7zM1698.4,190h1.7v7.2h-1.7zM1702.1,190h1.7v5.5h-1.7zM1705.7,190h1.7v8.1h-1.7zM1709.4,190h1.7v8.2h-1.7zM1713.0,190h1.7v6.6h-1.7zM1716.6,190h1.7v6.2h-1.7zM1720.3,190h1.7v6.9h-1.7zM1723.9,190h1.7v8.3h-1.7zM1727.5,190h1.7v7.2h-1.7zM1731.2,190h1.7v5.9h-1.7zM1734.8,190h1.7v6.0h-1.7zM1738.4,190h1.7v6.9h-1.7zM1742.1,190h1.7v8.1h-1.7zM1745.7,190h1.7v9.2h-1.7zM1749.3,190h1.7v6.2h-1.7zM1753.0,190h1.7v5.7h-1.7zM1756.6,190h1.7v6.5h-1.7zM1760.2,190h1.7v5.5h-1.7zM1763.9,190h1.7v5.9h-1.7zM1767.5,190h1.7v6.0h-1.7zM1771.1,190h1.7v7.8h-1.7zM1774.8,190h1.7v8.3h-1.7zM1778.4,190h1.7v5.6h-1.7zM1782.0,190h1.7v5.3h-1.7zM1785.7,190h1.7v5.8h-1.7zM1789.3,190h1.7v8.7h-1.7zM1792.9,190h1.7v6.7h-1.7zM1796.6,190h1.7v8.9h-1.7zM1800.2,190h1.7v8.8h-1.7zM1803.8,190h1.7v7.5h-1.7zM1807.5,190h1.7v6.1h-1.7zM1811.1,190h1.7v7.6h-1.7zM1814.7,190h1.7v7.6h-1.7zM1818.4,190h1.7v8.3h-1.7zM1822.0,190h1.7v5.5h-1.7zM1825.6,190h1.7v9.3h-1.7zM1829.3,190h1.7v8.1h-1.7z" fill="#c8fafa"/>
<path d="M515.9,191.7h1.4v2.3h-1.4zM519.5,184.2h1.4v9.8h-1.4zM523.2,185.2h1.4v8.8h-1.4zM526.8,189.1h1.4v4.9h-1.4zM541.3,189.8h1.4v4.2h-1.4zM545.0,188.8h1.4v5.2h-1.4zM548.6,189.0h1.4v5.0h-1.4zM559.5,189.3h1.4v4.7h-1.4zM563.1,188.9h1.4v5.1h-1.4zM566.8,191.9h1.4v2.1h-1.4zM574.0,189.8h1.4v4.2h-1.4zM577.7,188.4h1.4v5.6h-1.4zM581.3,189.3h1.4v4.7h-1.4zM584.9,185.5h1.4v8.5h-1.4zM588.6,185.0h1.4v9.0h-1.4zM592.2,187.2h1.4v6.8h-1.4zM595.8,186.5h1.4v7.5h-1.4zM599.5,188.7h1.4v5.3h-1.4zM603.1,190.7h1.4v3.3h-1.4zM610.4,191.3h1.4v2.7h-1.4zM621.3,188.8h1.4v5.2h-1.4zM624.9,188.7h1.4v5.3h-1.4zM628.6,191.0h1.4v3.0h-1.4zM639.5,189.3h1.4v4.7h-1.4zM646.7,187.1h1.4v6.9h-1.4zM650.4,181.5h1.4v12.5h-1.4zM654.0,188.5h1.4v5.5h-1.4zM657.6,189.3h1.4v4.7h-1.4zM664.9,190.2h1.4v3.8h-1.4zM668.5,190.8h1.4v3.2h-1.4zM672.2,190.7h1.4v3.3h-1.4zM675.8,190.7h1.4v3.3h-1.4zM679.4,190.1h1.4v3.9h-1.4zM686.7,191.6h1.4v2.4h-1.4zM694.0,189.3h1.4v4.7h-1.4zM697.6,189.1h1.4v4.9h-1.4zM708.5,186.9h1.4v7.1h-1.4zM712.1,189.9h1.4v4.1h-1.4zM715.8,187.0h1.4v7.0h-1.4zM719.4,184.5h1.4v9.5h-1.4zM723.0,187.6h1.4v6.4h-1.4zM726.7,188.4h1.4v5.6h-1.4zM730.3,187.3h1.4v6.7h-1.4zM733.9,191.0h1.4v3.0h-1.4zM737.6,190.9h1.4v3.1h-1.4zM741.2,189.1h1.4v4.9h-1.4zM744.8,189.4h1.4v4.6h-1.4zM752.1,191.3h1.4v2.7h-1.4zM755.7,189.0h1.4v5.0h-1.4zM763.0,190.8h1.4v3.2h-1.4zM766.6,190.1h1.4v3.9h-1.4zM777.5,183.7h1.4v10.3h-1.4zM781.2,183.5h1.4v10.5h-1.4zM784.8,182.3h1.4v11.7h-1.4zM788.4,185.0h1.4v9.0h-1.4zM792.1,185.0h1.4v9.0h-1.4zM795.7,188.8h1.4v5.2h-1.4zM799.4,190.4h1.4v3.6h-1.4zM803.0,191.7h1.4v2.3h-1.4zM806.6,189.4h1.4v4.6h-1.4zM810.3,190.2h1.4v3.8h-1.4zM817.5,189.8h1.4v4.2h-1.4zM824.8,190.2h1.4v3.8h-1.4zM832.1,189.2h1.4v4.8h-1.4zM835.7,188.7h1.4v5.3h-1.4zM839.3,187.6h1.4v6.4h-1.4zM843.0,186.2h1.4v7.8h-1.4zM846.6,185.1h1.4v8.9h-1.4zM850.2,183.3h1.4v10.7h-1.4zM853.9,185.7h1.4v8.3h-1.4zM857.5,186.5h1.4v7.5h-1.4zM861.1,189.9h1.4v4.1h-1.4zM864.8,191.5h1.4v2.5h-1.4zM868.4,189.5h1.4v4.5h-1.4zM872.0,191.7h1.4v2.3h-1.4zM875.7,189.5h1.4v4.5h-1.4zM879.3,191.1h1.4v2.9h-1.4zM886.6,191.9h1.4v2.1h-1.4zM890.2,189.2h1.4v4.8h-1.4zM893.8,189.9h1.4v4.1h-1.4zM897.5,190.8h1.4v3.2h-1.4zM904.7,190.0h1.4v4.0h-1.4zM908.4,186.0h1.4v8.0h-1.4zM912.0,183.9h1.4v10.1h-1.4zM915.6,180.2h1.4v13.8h-1.4zM919.3,188.1h1.4v5.9h-1.4zM922.9,191.1h1.4v2.9h-1.4zM926.5,189.9h1.4v4.1h-1.4zM930.2,189.0h1.4v5.0h-1.4zM933.8,189.1h1.4v4.9h-1.4zM937.4,190.4h1.4v3.6h-1.4zM948.3,189.5h1.4v4.5h-1.4zM955.6,188.5h1.4v5.5h-1.4zM973.8,188.2h1.4v5.8h-1.4zM977.4,184.5h1.4v9.5h-1.4zM981.1,190.2h1.4v3.8h-1.4zM984.7,189.2h1.4v4.8h-1.4zM988.3,187.2h1.4v6.8h-1.4zM992.0,189.1h1.4v4.9h-1.4zM995.6,190.9h1.4v3.1h-1.4zM999.2,191.4h1.4v2.6h-1.4zM1002.9,190.9h1.4v3.1h-1.4zM1006.5,189.8h1.4v4.2h-1.4zM1013.8,191.4h1.4v2.6h-1.4zM1028.3,190.8h1.4v3.2h-1.4zM1039.2,188.9h1.4v5.1h-1.4zM1042.8,186.1h1.4v7.9h-1.4zM1046.5,182.2h1.4v11.8h-1.4zM1050.1,179.9h1.4v14.1h-1.4zM1053.7,188.0h1.4v6.0h-1.4zM1064.6,190.3h1.4v3.7h-1.4zM1068.3,188.8h1.4v5.2h-1.4zM1071.9,189.3h1.4v4.7h-1.4zM1082.8,188.8h1.4v5.2h-1.4zM1086.4,190.8h1.4v3.2h-1.4zM1090.1,189.4h1.4v4.6h-1.4zM1093.7,189.1h1.4v4.9h-1.4zM1101.0,191.2h1.4v2.8h-1.4zM1111.9,189.0h1.4v5.0h-1.4zM1115.5,185.1h1.4v8.9h-1.4zM1119.1,187.1h1.4v6.9h-1.4zM1122.8,187.8h1.4v6.2h-1.4zM1126.4,189.9h1.4v4.1h-1.4zM1133.7,189.0h1.4v5.0h-1.4zM1140.9,190.2h1.4v3.8h-1.4zM1144.6,191.2h1.4v2.8h-1.4zM1148.2,191.9h1.4v2.1h-1.4zM1159.1,190.3h1.4v3.7h-1.4zM1162.8,191.9h1.4v2.1h-1.4zM1166.4,189.5h1.4v4.5h-1.4zM1177.3,185.8h1.4v8.2h-1.4zM1180.9,185.6h1.4v8.4h-1.4zM1184.6,187.9h1.4v6.1h-1.4zM1188.2,186.2h1.4v7.8h-1.4zM1191.8,189.6h1.4v4.4h-1.4zM1199.1,189.0h1.4v5.0h-1.4zM1202.7,191.3h1.4v2.7h-1.4zM1210.0,191.1h1.4v2.9h-1.4zM1213.6,191.1h1.4v2.9h-1.4zM1220.9,191.8h1.4v2.2h-1.4zM1224.5,191.1h1.4v2.9h-1.4zM1228.2,188.5h1.4v5.5h-1.4zM1231.8,190.8h1.4v3.2h-1.4zM1235.4,186.9h1.4v7.1h-1.4zM1239.1,185.0h1.4v9.0h-1.4zM1242.7,181.7h1.4v12.3h-1.4zM1246.3,184.9h1.4v9.1h-1.4zM1250.0,187.8h1.4v6.2h-1.4zM1253.6,189.6h1.4v4.4h-1.4zM1257.2,191.2h1.4v2.8h-1.4zM1260.9,190.6h1.4v3.4h-1.4zM1268.1,190.0h1.4v4.0h-1.4zM1275.4,190.4h1.4v3.6h-1.4zM1279.0,190.2h1.4v3.8h-1.4zM1282.7,189.6h1.4v4.4h-1.4zM1286.3,190.0h1.4v4.0h-1.4zM1293.6,191.8h1.4v2.2h-1.4zM1300.8,187.0h1.4v7.0h-1.4zM1304.5,191.3h1.4v2.7h-1.4zM1308.1,184.2h1.4v9.8h-1.4zM1311.7,187.0h1.4v7.0h-1.4zM1315.4,184.8h1.4v9.2h-1.4zM1319.0,187.9h1.4v6.1h-1.4zM1322.6,189.5h1.4v4.5h-1.4zM1326.3,190.0h1.4v4.0h-1.4zM1329.9,190.5h1.4v3.5h-1.4zM1340.8,190.3h1.4v3.7h-1.4zM1344.5,190.3h1.4v3.7h-1.4zM1351.7,189.8h1.4v4.2h-1.4zM1362.6,188.6h1.4v5.4h-1.4zM1366.3,188.4h1.4v5.6h-1.4zM1369.9,187.5h1.4v6.5h-1.4zM1373.5,188.4h1.4v5.6h-1.4zM1377.2,189.4h1.4v4.6h-1.4zM1380.8,187.5h1.4v6.5h-1.4zM1384.4,188.3h1.4v5.7h-1.4zM1388.1,189.3h1.4v4.7h-1.4zM1391.7,191.3h1.4v2.7h-1.4zM1402.6,189.0h1.4v5.0h-1.4zM1406.2,190.9h1.4v3.1h-1.4zM1409.9,188.7h1.4v5.3h-1.4zM1420.8,190.6h1.4v3.4h-1.4zM1431.7,189.9h1.4v4.1h-1.4zM1438.9,185.0h1.4v9.0h-1.4zM1442.6,189.7h1.4v4.3h-1.4zM1446.2,190.0h1.4v4.0h-1.4zM1449.8,187.0h1.4v7.0h-1.4zM1453.5,188.4h1.4v5.6h-1.4zM1457.1,190.7h1.4v3.3h-1.4zM1460.7,189.5h1.4v4.5h-1.4zM1471.6,189.4h1.4v4.6h-1.4zM1478.9,189.1h1.4v4.9h-1.4zM1482.5,190.2h1.4v3.8h-1.4zM1493.4,189.5h1.4v4.5h-1.4zM1497.1,190.5h1.4v3.5h-1.4zM1500.7,185.1h1.4v8.9h-1.4zM1504.3,182.8h1.4v11.2h-1.4zM1508.0,190.3h1.4v3.7h-1.4zM1511.6,185.3h1.4v8.7h-1.4zM1515.2,188.2h1.4v5.8h-1.4zM1518.9,189.5h1.4v4.5h-1.4zM1522.5,192.0h1.4v2.0h-1.4zM1526.2,189.7h1.4v4.3h-1.4zM1529.8,189.2h1.4v4.8h-1.4zM1537.1,190.1h1.4v3.9h-1.4zM1544.3,189.4h1.4v4.6h-1.4zM1548.0,191.1h1.4v2.9h-1.4zM1551.6,190.5h1.4v3.5h-1.4zM1558.9,190.6h1.4v3.4h-1.4zM1566.1,185.7h1.4v8.3h-1.4zM1569.8,186.2h1.4v7.8h-1.4zM1573.4,187.6h1.4v6.4h-1.4zM1577.0,188.8h1.4v5.2h-1.4zM1580.7,184.9h1.4v9.1h-1.4zM1606.1,190.4h1.4v3.6h-1.4zM1617.0,190.2h1.4v3.8h-1.4zM1620.6,189.4h1.4v4.6h-1.4zM1627.9,190.3h1.4v3.7h-1.4zM1631.5,186.7h1.4v7.3h-1.4zM1635.2,187.9h1.4v6.1h-1.4zM1638.8,186.5h1.4v7.5h-1.4zM1642.4,182.6h1.4v11.4h-1.4zM1646.1,187.4h1.4v6.6h-1.4zM1657.0,190.9h1.4v3.1h-1.4zM1664.2,188.9h1.4v5.1h-1.4zM1667.9,191.4h1.4v2.6h-1.4zM1675.1,190.5h1.4v3.5h-1.4zM1686.0,189.2h1.4v4.8h-1.4zM1689.7,190.0h1.4v4.0h-1.4zM1693.3,186.4h1.4v7.6h-1.4zM1696.9,185.3h1.4v8.7h-1.4zM1700.6,190.3h1.4v3.7h-1.4zM1704.2,181.3h1.4v12.7h-1.4zM1707.9,189.8h1.4v4.2h-1.4zM1711.5,187.0h1.4v7.0h-1.4zM1736.9,190.0h1.4v4.0h-1.4zM1751.5,190.3h1.4v3.7h-1.4zM1758.7,188.2h1.4v5.8h-1.4zM1762.4,185.9h1.4v8.1h-1.4zM1766.0,186.4h1.4v7.6h-1.4zM1769.6,184.5h1.4v9.5h-1.4zM1773.3,181.4h1.4v12.6h-1.4zM1784.2,191.4h1.4v2.6h-1.4zM1787.8,190.9h1.4v3.1h-1.4zM1791.4,189.0h1.4v5.0h-1.4zM1798.7,190.8h1.4v3.2h-1.4zM1809.6,188.8h1.4v5.2h-1.4zM1813.2,188.6h1.4v5.4h-1.4zM1816.9,189.0h1.4v5.0h-1.4zM1820.5,188.7h1.4v5.3h-1.4zM1827.8,185.9h1.4v8.1h-1.4z" fill="#000"/>
<path d="M515.9,134h1.6v8.4h-1.6zM530.4,134h1.6v8.7h-1.6zM534.1,134h1.6v10.0h-1.6zM537.7,134h1.6v11.5h-1.6zM541.3,134h1.6v6.3h-1.6zM545.0,134h1.6v10.2h-1.6zM548.6,134h1.6v20.8h-1.6zM552.2,134h1.6v14.9h-1.6zM555.9,134h1.6v6.7h-1.6zM559.5,134h1.6v11.5h-1.6zM563.1,134h1.6v8.9h-1.6zM566.8,134h1.6v12.0h-1.6zM570.4,134h1.6v8.9h-1.6zM574.0,134h1.6v11.7h-1.6zM577.7,134h1.6v8.5h-1.6zM581.3,134h1.6v6.4h-1.6zM584.9,134h1.6v4.2h-1.6zM588.6,134h1.6v6.8h-1.6zM595.8,134h1.6v6.5h-1.6zM599.5,134h1.6v8.7h-1.6zM603.1,134h1.6v9.1h-1.6zM606.8,134h1.6v11.8h-1.6zM610.4,134h1.6v9.6h-1.6zM614.0,134h1.6v8.3h-1.6zM617.7,134h1.6v7.9h-1.6zM621.3,134h1.6v9.3h-1.6zM624.9,134h1.6v14.0h-1.6zM628.6,134h1.6v10.3h-1.6zM632.2,134h1.6v4.5h-1.6zM635.8,134h1.6v11.2h-1.6zM643.1,134h1.6v9.3h-1.6zM646.7,134h1.6v6.7h-1.6zM650.4,134h1.6v8.3h-1.6zM657.6,134h1.6v6.1h-1.6zM661.3,134h1.6v5.0h-1.6zM668.5,134h1.6v10.4h-1.6zM672.2,134h1.6v11.8h-1.6zM675.8,134h1.6v13.9h-1.6zM679.4,134h1.6v14.3h-1.6zM683.1,134h1.6v11.3h-1.6zM686.7,134h1.6v16.2h-1.6zM690.3,134h1.6v13.4h-1.6zM694.0,134h1.6v5.1h-1.6zM697.6,134h1.6v4.8h-1.6zM708.5,134h1.6v10.1h-1.6zM712.1,134h1.6v6.6h-1.6zM715.8,134h1.6v10.0h-1.6zM719.4,134h1.6v8.0h-1.6zM723.0,134h1.6v9.4h-1.6zM726.7,134h1.6v10.0h-1.6zM730.3,134h1.6v5.7h-1.6zM733.9,134h1.6v10.5h-1.6zM737.6,134h1.6v9.9h-1.6zM741.2,134h1.6v16.0h-1.6zM744.8,134h1.6v15.0h-1.6zM748.5,134h1.6v8.0h-1.6zM755.7,134h1.6v12.3h-1.6zM759.4,134h1.6v9.9h-1.6zM763.0,134h1.6v6.9h-1.6zM766.6,134h1.6v5.7h-1.6zM770.3,134h1.6v9.3h-1.6zM773.9,134h1.6v11.5h-1.6zM777.5,134h1.6v9.4h-1.6zM781.2,134h1.6v8.3h-1.6zM784.8,134h1.6v5.5h-1.6zM788.4,134h1.6v11.5h-1.6zM792.1,134h1.6v7.7h-1.6zM795.7,134h1.6v10.0h-1.6zM799.4,134h1.6v7.4h-1.6zM803.0,134h1.6v11.1h-1.6zM806.6,134h1.6v11.3h-1.6zM810.3,134h1.6v10.2h-1.6zM813.9,134h1.6v13.3h-1.6zM817.5,134h1.6v14.2h-1.6zM821.2,134h1.6v9.2h-1.6zM824.8,134h1.6v4.5h-1.6zM828.4,134h1.6v8.2h-1.6zM832.1,134h1.6v8.5h-1.6zM835.7,134h1.6v6.9h-1.6zM850.2,134h1.6v4.3h-1.6zM853.9,134h1.6v7.4h-1.6zM857.5,134h1.6v11.2h-1.6zM861.1,134h1.6v4.0h-1.6zM864.8,134h1.6v6.1h-1.6zM868.4,134h1.6v4.6h-1.6zM872.0,134h1.6v7.4h-1.6zM875.7,134h1.6v12.4h-1.6zM879.3,134h1.6v16.5h-1.6zM882.9,134h1.6v7.4h-1.6zM886.6,134h1.6v4.1h-1.6zM890.2,134h1.6v11.4h-1.6zM897.5,134h1.6v6.3h-1.6zM904.7,134h1.6v10.7h-1.6zM908.4,134h1.6v7.8h-1.6zM912.0,134h1.6v7.9h-1.6zM915.6,134h1.6v4.8h-1.6zM919.3,134h1.6v11.2h-1.6zM926.5,134h1.6v5.9h-1.6zM930.2,134h1.6v12.1h-1.6zM933.8,134h1.6v9.2h-1.6zM937.4,134h1.6v13.3h-1.6zM941.1,134h1.6v15.3h-1.6zM944.7,134h1.6v13.0h-1.6zM948.3,134h1.6v12.0h-1.6zM952.0,134h1.6v8.1h-1.6zM955.6,134h1.6v9.7h-1.6zM959.2,134h1.6v4.7h-1.6zM962.9,134h1.6v11.0h-1.6zM966.5,134h1.6v7.3h-1.6zM970.1,134h1.6v10.2h-1.6zM973.8,134h1.6v11.5h-1.6zM977.4,134h1.6v4.3h-1.6zM981.1,134h1.6v6.3h-1.6zM984.7,134h1.6v9.6h-1.6zM988.3,134h1.6v7.7h-1.6zM992.0,134h1.6v11.1h-1.6zM995.6,134h1.6v9.0h-1.6zM999.2,134h1.6v15.4h-1.6zM1002.9,134h1.6v7.1h-1.6zM1006.5,134h1.6v9.9h-1.6zM1010.1,134h1.6v12.8h-1.6zM1013.8,134h1.6v14.0h-1.6zM1017.4,134h1.6v14.6h-1.6zM1024.7,134h1.6v8.1h-1.6zM1035.6,134h1.6v6.5h-1.6zM1042.8,134h1.6v7.9h-1.6zM1046.5,134h1.6v8.1h-1.6zM1050.1,134h1.6v7.1h-1.6zM1053.7,134h1.6v7.1h-1.6zM1057.4,134h1.6v5.6h-1.6zM1064.6,134h1.6v10.5h-1.6zM1068.3,134h1.6v6.2h-1.6zM1071.9,134h1.6v15.7h-1.6zM1075.5,134h1.6v19.0h-1.6zM1079.2,134h1.6v7.8h-1.6zM1082.8,134h1.6v5.6h-1.6zM1086.4,134h1.6v12.6h-1.6zM1090.1,134h1.6v9.6h-1.6zM1093.7,134h1.6v7.7h-1.6zM1097.3,134h1.6v11.5h-1.6zM1108.2,134h1.6v4.1h-1.6zM1111.9,134h1.6v8.2h-1.6zM1115.5,134h1.6v6.6h-1.6zM1126.4,134h1.6v9.5h-1.6zM1130.0,134h1.6v14.1h-1.6zM1133.7,134h1.6v13.8h-1.6zM1137.3,134h1.6v9.0h-1.6zM1140.9,134h1.6v17.8h-1.6zM1144.6,134h1.6v15.8h-1.6zM1148.2,134h1.6v5.5h-1.6zM1159.1,134h1.6v9.5h-1.6zM1162.8,134h1.6v5.5h-1.6zM1166.4,134h1.6v10.7h-1.6zM1170.0,134h1.6v9.3h-1.6zM1173.7,134h1.6v4.7h-1.6zM1177.3,134h1.6v4.1h-1.6zM1180.9,134h1.6v8.7h-1.6zM1184.6,134h1.6v11.5h-1.6zM1191.8,134h1.6v5.9h-1.6zM1195.5,134h1.6v13.8h-1.6zM1199.1,134h1.6v7.7h-1.6zM1202.7,134h1.6v12.7h-1.6zM1206.4,134h1.6v11.7h-1.6zM1210.0,134h1.6v10.2h-1.6zM1213.6,134h1.6v5.8h-1.6zM1217.3,134h1.6v10.2h-1.6zM1220.9,134h1.6v8.3h-1.6zM1228.2,134h1.6v5.8h-1.6zM1231.8,134h1.6v9.7h-1.6zM1239.1,134h1.6v8.7h-1.6zM1242.7,134h1.6v11.1h-1.6zM1246.3,134h1.6v4.1h-1.6zM1250.0,134h1.6v9.6h-1.6zM1253.6,134h1.6v5.4h-1.6zM1257.2,134h1.6v8.1h-1.6zM1264.5,134h1.6v13.3h-1.6zM1268.1,134h1.6v10.0h-1.6zM1271.8,134h1.6v15.4h-1.6zM1275.4,134h1.6v10.3h-1.6zM1279.0,134h1.6v10.8h-1.6zM1289.9,134h1.6v5.4h-1.6zM1293.6,134h1.6v11.6h-1.6zM1297.2,134h1.6v11.4h-1.6zM1300.8,134h1.6v7.9h-1.6zM1304.5,134h1.6v5.1h-1.6zM1308.1,134h1.6v7.1h-1.6zM1311.7,134h1.6v6.3h-1.6zM1319.0,134h1.6v9.3h-1.6zM1322.6,134h1.6v7.4h-1.6zM1326.3,134h1.6v4.3h-1.6zM1329.9,134h1.6v13.5h-1.6zM1333.5,134h1.6v15.1h-1.6zM1337.2,134h1.6v13.3h-1.6zM1340.8,134h1.6v14.9h-1.6zM1348.1,134h1.6v12.3h-1.6zM1351.7,134h1.6v7.8h-1.6zM1359.0,134h1.6v4.7h-1.6zM1362.6,134h1.6v9.0h-1.6zM1366.3,134h1.6v9.4h-1.6zM1369.9,134h1.6v8.8h-1.6zM1373.5,134h1.6v6.9h-1.6zM1377.2,134h1.6v4.5h-1.6zM1380.8,134h1.6v5.4h-1.6zM1384.4,134h1.6v4.3h-1.6zM1388.1,134h1.6v6.0h-1.6zM1391.7,134h1.6v9.1h-1.6zM1395.3,134h1.6v16.0h-1.6zM1399.0,134h1.6v18.9h-1.6zM1402.6,134h1.6v10.9h-1.6zM1406.2,134h1.6v6.9h-1.6zM1413.5,134h1.6v12.3h-1.6zM1417.1,134h1.6v5.8h-1.6zM1420.8,134h1.6v6.4h-1.6zM1424.4,134h1.6v10.7h-1.6zM1428.0,134h1.6v6.0h-1.6zM1435.3,134h1.6v11.2h-1.6zM1438.9,134h1.6v11.4h-1.6zM1442.6,134h1.6v9.2h-1.6zM1449.8,134h1.6v8.3h-1.6zM1453.5,134h1.6v10.5h-1.6zM1457.1,134h1.6v10.9h-1.6zM1460.7,134h1.6v11.2h-1.6zM1464.4,134h1.6v13.0h-1.6zM1468.0,134h1.6v10.0h-1.6zM1471.6,134h1.6v12.3h-1.6zM1475.3,134h1.6v15.4h-1.6zM1478.9,134h1.6v6.3h-1.6zM1482.5,134h1.6v4.2h-1.6zM1486.2,134h1.6v9.6h-1.6zM1489.8,134h1.6v4.1h-1.6zM1493.4,134h1.6v8.7h-1.6zM1497.1,134h1.6v9.8h-1.6zM1504.3,134h1.6v6.7h-1.6zM1508.0,134h1.6v8.8h-1.6zM1511.6,134h1.6v8.8h-1.6zM1515.2,134h1.6v8.9h-1.6zM1518.9,134h1.6v6.9h-1.6zM1522.5,134h1.6v6.5h-1.6zM1526.2,134h1.6v14.6h-1.6zM1529.8,134h1.6v8.1h-1.6zM1533.4,134h1.6v14.8h-1.6zM1537.1,134h1.6v7.3h-1.6zM1540.7,134h1.6v5.1h-1.6zM1544.3,134h1.6v7.3h-1.6zM1555.2,134h1.6v11.4h-1.6zM1558.9,134h1.6v11.8h-1.6zM1562.5,134h1.6v10.0h-1.6zM1566.1,134h1.6v10.8h-1.6zM1573.4,134h1.6v10.0h-1.6zM1580.7,134h1.6v7.8h-1.6zM1584.3,134h1.6v11.1h-1.6zM1587.9,134h1.6v7.6h-1.6zM1591.6,134h1.6v12.9h-1.6zM1595.2,134h1.6v12.2h-1.6zM1598.8,134h1.6v16.1h-1.6zM1602.5,134h1.6v11.8h-1.6zM1606.1,134h1.6v12.6h-1.6zM1609.7,134h1.6v12.1h-1.6zM1613.4,134h1.6v8.8h-1.6zM1617.0,134h1.6v8.7h-1.6zM1624.3,134h1.6v5.3h-1.6zM1627.9,134h1.6v10.6h-1.6zM1638.8,134h1.6v10.2h-1.6zM1642.4,134h1.6v10.6h-1.6zM1649.7,134h1.6v5.7h-1.6zM1653.3,134h1.6v13.5h-1.6zM1657.0,134h1.6v6.1h-1.6zM1660.6,134h1.6v8.3h-1.6zM1664.2,134h1.6v7.6h-1.6zM1667.9,134h1.6v16.1h-1.6zM1671.5,134h1.6v9.2h-1.6zM1675.1,134h1.6v10.4h-1.6zM1678.8,134h1.6v6.1h-1.6zM1682.4,134h1.6v9.9h-1.6zM1689.7,134h1.6v7.3h-1.6zM1693.3,134h1.6v11.4h-1.6zM1700.6,134h1.6v11.1h-1.6zM1704.2,134h1.6v4.2h-1.6zM1711.5,134h1.6v5.6h-1.6zM1715.1,134h1.6v6.3h-1.6zM1722.4,134h1.6v14.7h-1.6zM1726.0,134h1.6v13.3h-1.6zM1729.7,134h1.6v18.5h-1.6zM1733.3,134h1.6v11.5h-1.6zM1736.9,134h1.6v13.0h-1.6zM1740.6,134h1.6v11.0h-1.6zM1744.2,134h1.6v11.1h-1.6zM1747.8,134h1.6v7.7h-1.6zM1751.5,134h1.6v10.9h-1.6zM1755.1,134h1.6v9.9h-1.6zM1758.7,134h1.6v8.7h-1.6zM1762.4,134h1.6v11.4h-1.6zM1766.0,134h1.6v5.4h-1.6zM1769.6,134h1.6v11.6h-1.6zM1773.3,134h1.6v8.7h-1.6zM1776.9,134h1.6v6.0h-1.6zM1780.5,134h1.6v4.7h-1.6zM1784.2,134h1.6v13.6h-1.6zM1787.8,134h1.6v5.3h-1.6zM1791.4,134h1.6v15.7h-1.6zM1795.1,134h1.6v13.8h-1.6zM1798.7,134h1.6v7.6h-1.6zM1802.3,134h1.6v11.8h-1.6zM1806.0,134h1.6v9.0h-1.6zM1813.2,134h1.6v9.0h-1.6zM1816.9,134h1.6v11.9h-1.6zM1820.5,134h1.6v10.3h-1.6zM1824.1,134h1.6v10.2h-1.6z" fill="#142424"/>
<rect x="1826.6" y="134" width="1.5" height="62" fill="#c8fafa"/>
<rect x="534.4" y="134" width="29.5" height="59.5" fill="#000" opacity="0.07"/><path d="M541,158 L553,140" stroke="#9cc" stroke-width="1.5" opacity="0.5"/>
<text x="1128.5" y="497.8" font-size="15" fill="#dedede" font-weight="normal" letter-spacing="0.9" text-anchor="middle"  stroke="#dedede" stroke-width="0.35">Спектр</text>
<line x1="496.5" y1="549.0" x2="1828.0" y2="549.0" stroke="#525252" stroke-width="1.5"/><line x1="496.5" y1="590.8" x2="1828.0" y2="590.8" stroke="#525252" stroke-width="1.5"/><line x1="496.5" y1="632.5" x2="1828.0" y2="632.5" stroke="#525252" stroke-width="1.5"/><line x1="496.5" y1="674.2" x2="1828.0" y2="674.2" stroke="#525252" stroke-width="1.5"/><line x1="496.5" y1="716.0" x2="1828.0" y2="716.0" stroke="#525252" stroke-width="1.5"/><line x1="496.5" y1="757.8" x2="1828.0" y2="757.8" stroke="#525252" stroke-width="1.5"/><line x1="496.5" y1="799.5" x2="1828.0" y2="799.5" stroke="#525252" stroke-width="1.5"/><line x1="496.5" y1="841.2" x2="1828.0" y2="841.2" stroke="#525252" stroke-width="1.5"/><line x1="496.5" y1="883.0" x2="1828.0" y2="883.0" stroke="#525252" stroke-width="1.5"/><line x1="496.5" y1="924.8" x2="1828.0" y2="924.8" stroke="#525252" stroke-width="1.5"/><line x1="585.2" y1="508" x2="585.2" y2="924.75" stroke="#525252" stroke-width="1.5"/><line x1="674.0" y1="508" x2="674.0" y2="924.75" stroke="#525252" stroke-width="1.5"/><line x1="762.7" y1="508" x2="762.7" y2="924.75" stroke="#525252" stroke-width="1.5"/><line x1="851.4" y1="508" x2="851.4" y2="924.75" stroke="#525252" stroke-width="1.5"/><line x1="940.2" y1="508" x2="940.2" y2="924.75" stroke="#525252" stroke-width="1.5"/><line x1="1028.9" y1="508" x2="1028.9" y2="924.75" stroke="#525252" stroke-width="1.5"/><line x1="1117.6" y1="508" x2="1117.6" y2="924.75" stroke="#525252" stroke-width="1.5"/><line x1="1206.4" y1="508" x2="1206.4" y2="924.75" stroke="#525252" stroke-width="1.5"/><line x1="1295.1" y1="508" x2="1295.1" y2="924.75" stroke="#525252" stroke-width="1.5"/><line x1="1383.8" y1="508" x2="1383.8" y2="924.75" stroke="#525252" stroke-width="1.5"/><line x1="1472.6" y1="508" x2="1472.6" y2="924.75" stroke="#525252" stroke-width="1.5"/><line x1="1561.3" y1="508" x2="1561.3" y2="924.75" stroke="#525252" stroke-width="1.5"/><line x1="1650.0" y1="508" x2="1650.0" y2="924.75" stroke="#525252" stroke-width="1.5"/><line x1="1738.8" y1="508" x2="1738.8" y2="924.75" stroke="#525252" stroke-width="1.5"/>
<text x="485.5" y="513.55" font-size="16" fill="#dedede" font-weight="normal" letter-spacing="0.9" text-anchor="end"  stroke="#dedede" stroke-width="0.35">0</text>
<text x="485.5" y="555.3" font-size="16" fill="#dedede" font-weight="normal" letter-spacing="0.9" text-anchor="end"  stroke="#dedede" stroke-width="0.35">-10</text>
<text x="485.5" y="597.05" font-size="16" fill="#dedede" font-weight="normal" letter-spacing="0.9" text-anchor="end"  stroke="#dedede" stroke-width="0.35">-20</text>
<text x="485.5" y="638.8" font-size="16" fill="#dedede" font-weight="normal" letter-spacing="0.9" text-anchor="end"  stroke="#dedede" stroke-width="0.35">-30</text>
<text x="485.5" y="680.55" font-size="16" fill="#dedede" font-weight="normal" letter-spacing="0.9" text-anchor="end"  stroke="#dedede" stroke-width="0.35">-40</text>
<text x="485.5" y="722.3" font-size="16" fill="#dedede" font-weight="normal" letter-spacing="0.9" text-anchor="end"  stroke="#dedede" stroke-width="0.35">-50</text>
<text x="485.5" y="764.05" font-size="16" fill="#dedede" font-weight="normal" letter-spacing="0.9" text-anchor="end"  stroke="#dedede" stroke-width="0.35">-60</text>
<text x="485.5" y="805.8" font-size="16" fill="#dedede" font-weight="normal" letter-spacing="0.9" text-anchor="end"  stroke="#dedede" stroke-width="0.35">-70</text>
<text x="485.5" y="847.55" font-size="16" fill="#dedede" font-weight="normal" letter-spacing="0.9" text-anchor="end"  stroke="#dedede" stroke-width="0.35">-80</text>
<text x="485.5" y="889.3" font-size="16" fill="#dedede" font-weight="normal" letter-spacing="0.9" text-anchor="end"  stroke="#dedede" stroke-width="0.35">-90</text>
<text x="485.5" y="931.05" font-size="16" fill="#dedede" font-weight="normal" letter-spacing="0.9" text-anchor="end"  stroke="#dedede" stroke-width="0.35">-100</text>
<text x="497.2" y="951.5" font-size="16" fill="#dedede" font-weight="normal" letter-spacing="0.65" text-anchor="middle"  stroke="#dedede" stroke-width="0.35">0</text>
<text x="585.9333333333334" y="951.5" font-size="16" fill="#dedede" font-weight="normal" letter-spacing="0.65" text-anchor="middle"  stroke="#dedede" stroke-width="0.35">200</text>
<text x="674.6666666666667" y="951.5" font-size="16" fill="#dedede" font-weight="normal" letter-spacing="0.65" text-anchor="middle"  stroke="#dedede" stroke-width="0.35">400</text>
<text x="763.4000000000001" y="951.5" font-size="16" fill="#dedede" font-weight="normal" letter-spacing="0.65" text-anchor="middle"  stroke="#dedede" stroke-width="0.35">600</text>
<text x="852.1333333333334" y="951.5" font-size="16" fill="#dedede" font-weight="normal" letter-spacing="0.65" text-anchor="middle"  stroke="#dedede" stroke-width="0.35">800</text>
<text x="940.8666666666668" y="951.5" font-size="16" fill="#dedede" font-weight="normal" letter-spacing="0.65" text-anchor="middle"  stroke="#dedede" stroke-width="0.35">1000</text>
<text x="1029.6000000000001" y="951.5" font-size="16" fill="#dedede" font-weight="normal" letter-spacing="0.65" text-anchor="middle"  stroke="#dedede" stroke-width="0.35">1200</text>
<text x="1118.3333333333333" y="951.5" font-size="16" fill="#dedede" font-weight="normal" letter-spacing="0.65" text-anchor="middle"  stroke="#dedede" stroke-width="0.35">1400</text>
<text x="1207.0666666666668" y="951.5" font-size="16" fill="#dedede" font-weight="normal" letter-spacing="0.65" text-anchor="middle"  stroke="#dedede" stroke-width="0.35">1600</text>
<text x="1295.8" y="951.5" font-size="16" fill="#dedede" font-weight="normal" letter-spacing="0.65" text-anchor="middle"  stroke="#dedede" stroke-width="0.35">1800</text>
<text x="1384.5333333333335" y="951.5" font-size="16" fill="#dedede" font-weight="normal" letter-spacing="0.65" text-anchor="middle"  stroke="#dedede" stroke-width="0.35">2000</text>
<text x="1473.2666666666667" y="951.5" font-size="16" fill="#dedede" font-weight="normal" letter-spacing="0.65" text-anchor="middle"  stroke="#dedede" stroke-width="0.35">2200</text>
<text x="1562.0" y="951.5" font-size="16" fill="#dedede" font-weight="normal" letter-spacing="0.65" text-anchor="middle"  stroke="#dedede" stroke-width="0.35">2400</text>
<text x="1650.7333333333333" y="951.5" font-size="16" fill="#dedede" font-weight="normal" letter-spacing="0.65" text-anchor="middle"  stroke="#dedede" stroke-width="0.35">2600</text>
<text x="1739.4666666666667" y="951.5" font-size="16" fill="#dedede" font-weight="normal" letter-spacing="0.65" text-anchor="middle"  stroke="#dedede" stroke-width="0.35">2800</text>
<text x="1828.2" y="951.5" font-size="16" fill="#dedede" font-weight="normal" letter-spacing="0.65" text-anchor="middle"  stroke="#dedede" stroke-width="0.35">3000</text>
<text x="1161" y="968" font-size="15" fill="#dedede" font-weight="normal" letter-spacing="1.05" text-anchor="middle"  stroke="#dedede" stroke-width="0.35">Частота [Гц]</text>
<text x="0" y="0" font-size="15" fill="#dedede" font-weight="normal" letter-spacing="1.35" text-anchor="middle" transform="translate(439.2,718.5) rotate(-90)" stroke="#dedede" stroke-width="0.35">Амплитуда [дБ]</text>
<rect x="515.5" y="525.3" width="29" height="29" rx="4.5" fill="none" stroke="#2e2e2e" stroke-width="1.4"/><rect x="515.5" y="565.4" width="29" height="29" rx="4.5" fill="none" stroke="#2e2e2e" stroke-width="1.4"/><rect x="515.5" y="605.5" width="29" height="29" rx="4.5" fill="none" stroke="#2e2e2e" stroke-width="1.4"/><rect x="515.5" y="645.5" width="29" height="29" rx="4.5" fill="none" stroke="#2e2e2e" stroke-width="1.4"/><rect x="515.5" y="685.5" width="29" height="29" rx="4.5" fill="none" stroke="#2e2e2e" stroke-width="1.4"/>
<path d="M520.5,620.0 h19 M530.0,610.5 v19" stroke="#383838" stroke-width="2.6"/><path d="M520.5,660.0 h19" stroke="#383838" stroke-width="2.6"/><path d="M519.0,693.0 L526.5,700.0 L519.0,707.0 Z M541.0,693.0 L533.5,700.0 L541.0,707.0 Z" fill="#383838"/><rect x="529.0" y="689.5" width="2" height="2" fill="#383838"/><rect x="529.0" y="695.5" width="2" height="2" fill="#383838"/><rect x="529.0" y="701.5" width="2" height="2" fill="#383838"/><rect x="529.0" y="707.5" width="2" height="2" fill="#383838"/>
<path d="M519,540 l3.5,3.5 l5,-13" fill="none" stroke="#333" stroke-width="2.2"/><path d="M525,547 h15 M538,532 v14" fill="none" stroke="#333" stroke-width="1.3" stroke-dasharray="2,3"/>
<path d="M521,568.5 v15.5 h17.5 M521.5,574 l3,-3.5 l3,2.5 l3,-2.5 l3,2.5 l3,-3" fill="none" stroke="#333" stroke-width="1.4"/>
<polygon points="496.5,924.75 496.5,822.2 497.0,822.2 497.5,813.9 498.0,828.2 498.5,831.6 499.0,824.3 499.5,821.0 500.0,812.6 500.5,828.8 501.0,822.0 501.5,817.6 502.0,828.8 502.5,816.6 503.0,827.3 503.5,819.7 504.0,812.0 504.5,821.4 505.0,813.5 505.5,814.7 506.0,825.2 506.5,813.2 507.0,823.2 507.5,821.5 508.0,820.4 508.5,831.4 509.0,829.7 509.5,829.1 510.0,831.8 510.5,827.5 511.0,808.8 511.5,824.0 512.0,831.2 512.5,829.3 513.0,830.2 513.5,815.8 514.0,815.9 514.5,824.1 515.0,812.8 515.5,826.1 516.0,823.9 516.5,824.6 517.0,829.0 517.5,830.3 518.0,817.4 518.5,815.5 519.0,814.6 519.5,831.6 520.0,823.4 520.5,830.2 521.0,812.4 521.5,826.6 522.0,813.5 522.5,830.0 523.0,827.9 523.5,825.7 524.0,820.3 524.5,823.5 525.0,823.7 525.5,824.8 526.0,826.6 526.5,823.6 527.0,813.7 527.5,824.0 528.0,826.0 528.5,830.4 529.0,818.0 529.5,815.4 530.0,820.8 530.5,825.3 531.0,828.1 531.5,819.7 532.0,814.7 532.5,829.0 533.0,817.5 533.5,817.5 534.0,824.5 534.5,828.8 535.0,806.5 535.5,826.2 536.0,826.7 536.5,812.5 537.0,809.8 537.5,824.6 538.0,831.2 538.5,821.5 539.0,821.4 539.5,817.4 540.0,822.4 540.5,819.9 541.0,813.7 541.5,814.6 542.0,830.2 542.5,829.6 543.0,821.3 543.5,826.4 544.0,826.4 544.5,831.6 545.0,827.8 545.5,829.1 546.0,820.8 546.5,815.3 547.0,828.0 547.5,826.6 548.0,826.5 548.5,830.9 549.0,813.7 549.5,817.8 550.0,822.5 550.5,818.2 551.0,830.0 551.5,831.4 552.0,816.0 552.5,816.3 553.0,820.0 553.5,821.8 554.0,822.8 554.5,830.5 555.0,814.5 555.5,830.0 556.0,815.8 556.5,814.6 557.0,815.9 557.5,818.4 558.0,814.1 558.5,822.2 559.0,822.6 559.5,820.3 560.0,816.1 560.5,822.6 561.0,829.1 561.5,828.2 562.0,818.3 562.5,832.0 563.0,816.8 563.5,813.9 564.0,824.6 564.5,812.4 565.0,830.2 565.5,822.1 566.0,825.7 566.5,809.7 567.0,821.9 567.5,828.8 568.0,806.3 568.5,827.3 569.0,822.3 569.5,812.3 570.0,815.6 570.5,820.1 571.0,815.1 571.5,826.1 572.0,820.1 572.5,831.7 573.0,830.2 573.5,828.3 574.0,829.6 574.5,827.3 575.0,813.4 575.5,812.2 576.0,824.5 576.5,825.3 577.0,823.4 577.5,832.0 578.0,827.2 578.5,824.3 579.0,818.5 579.5,814.0 580.0,823.0 580.5,823.4 581.0,823.4 581.5,812.9 582.0,821.4 582.5,816.7 583.0,822.5 583.5,817.7 584.0,817.7 584.5,812.3 585.0,815.1 585.5,830.0 586.0,831.8 586.5,830.1 587.0,831.5 587.5,830.7 588.0,831.6 588.5,814.3 589.0,811.8 589.5,820.9 590.0,817.2 590.5,827.6 591.0,831.1 591.5,814.3 592.0,824.5 592.5,825.7 593.0,824.7 593.5,817.0 594.0,829.1 594.5,820.5 595.0,822.1 595.5,823.0 596.0,821.6 596.5,826.9 597.0,814.4 597.5,827.4 598.0,817.2 598.5,825.1 599.0,823.0 599.5,820.6 600.0,828.8 600.5,821.7 601.0,825.8 601.5,813.6 602.0,825.9 602.5,819.2 603.0,814.3 603.5,830.4 604.0,820.8 604.5,818.4 605.0,829.9 605.5,819.3 606.0,815.9 606.5,825.1 607.0,823.5 607.5,822.9 608.0,823.7 608.5,813.6 609.0,818.7 609.5,816.4 610.0,819.9 610.5,821.9 611.0,828.6 611.5,828.4 612.0,825.3 612.5,824.1 613.0,823.4 613.5,816.1 614.0,813.2 614.5,819.8 615.0,819.3 615.5,815.7 616.0,820.1 616.5,815.5 617.0,820.1 617.5,822.4 618.0,817.6 618.5,821.6 619.0,817.5 619.5,812.2 620.0,817.4 620.5,818.4 621.0,817.8 621.5,815.0 622.0,821.4 622.5,820.9 623.0,813.9 623.5,815.3 624.0,819.0 624.5,813.2 625,924.75" fill="#94c4c2"/>
<polygon points="496.5,924.75 496.5,827.8 497.0,834.7 497.5,831.2 498.0,832.8 498.5,839.4 499.0,835.5 499.5,838.0 500.0,839.8 500.5,841.0 501.0,838.6 501.5,841.6 502.0,834.5 502.5,830.8 503.0,835.2 503.5,833.6 504.0,832.7 504.5,827.6 505.0,830.0 505.5,831.2 506.0,825.2 506.5,825.4 507.0,826.0 507.5,825.9 508.0,827.6 508.5,831.4 509.0,829.7 509.5,829.1 510.0,831.8 510.5,827.5 511.0,824.3 511.5,824.5 512.0,831.2 512.5,829.3 513.0,830.2 513.5,824.2 514.0,823.7 514.5,824.1 515.0,820.3 515.5,826.7 516.0,823.9 516.5,829.5 517.0,830.1 517.5,831.0 518.0,834.1 518.5,840.7 519.0,845.3 519.5,845.2 520.0,840.7 520.5,848.6 521.0,844.5 521.5,847.8 522.0,844.6 522.5,843.0 523.0,838.8 523.5,841.6 524.0,840.3 524.5,835.6 525.0,832.7 525.5,838.9 526.0,837.9 526.5,839.2 527.0,833.3 527.5,835.5 528.0,839.1 528.5,834.6 529.0,836.1 529.5,839.4 530.0,836.0 530.5,835.7 531.0,837.9 531.5,831.7 532.0,834.2 532.5,833.4 533.0,828.0 533.5,826.6 534.0,825.2 534.5,828.8 535.0,823.3 535.5,826.5 536.0,829.1 536.5,829.2 537.0,833.0 537.5,837.9 538.0,835.1 538.5,835.3 539.0,837.9 539.5,842.7 540.0,843.4 540.5,844.1 541.0,841.6 541.5,839.3 542.0,837.0 542.5,837.9 543.0,829.8 543.5,831.3 544.0,831.5 544.5,831.6 545.0,829.1 545.5,829.1 546.0,827.2 546.5,821.8 547.0,828.0 547.5,826.6 548.0,828.6 548.5,831.2 549.0,828.2 549.5,829.2 550.0,828.3 550.5,830.1 551.0,830.0 551.5,831.4 552.0,824.6 552.5,823.7 553.0,823.4 553.5,821.8 554.0,826.2 554.5,830.5 555.0,826.8 555.5,830.0 556.0,831.6 556.5,827.0 557.0,835.1 557.5,837.4 558.0,836.1 558.5,839.2 559.0,842.6 559.5,842.3 560.0,847.0 560.5,847.0 561.0,847.6 561.5,843.2 562.0,841.0 562.5,838.7 563.0,837.9 563.5,837.4 564.0,837.9 564.5,836.6 565.0,831.2 565.5,833.8 566.0,830.2 566.5,834.1 567.0,832.1 567.5,838.6 568.0,835.5 568.5,836.2 569.0,837.6 569.5,839.6 570.0,838.5 570.5,833.3 571.0,837.4 571.5,834.8 572.0,832.5 572.5,831.7 573.0,832.1 573.5,832.0 574.0,830.4 574.5,829.9 575.0,828.3 575.5,830.5 576.0,834.3 576.5,833.7 577.0,833.4 577.5,837.9 578.0,834.3 578.5,837.8 579.0,839.9 579.5,844.8 580.0,845.4 580.5,842.2 581.0,842.0 581.5,835.5 582.0,836.1 582.5,833.1 583.0,830.3 583.5,829.5 584.0,825.2 584.5,821.4 585.0,822.9 585.5,830.0 586.0,831.8 586.5,830.1 587.0,831.5 587.5,830.7 588.0,831.6 588.5,825.5 589.0,823.7 589.5,826.9 590.0,827.0 590.5,831.6 591.0,831.1 591.5,829.1 592.0,824.5 592.5,826.4 593.0,824.7 593.5,828.2 594.0,829.1 594.5,822.4 595.0,828.0 595.5,827.1 596.0,828.9 596.5,829.1 597.0,836.0 597.5,837.1 598.0,839.2 598.5,841.1 599.0,847.8 599.5,842.5 600.0,846.9 600.5,844.4 601.0,846.2 601.5,844.3 602.0,839.0 602.5,837.7 603.0,836.2 603.5,838.7 604.0,831.2 604.5,833.2 605.0,830.9 605.5,827.9 606.0,827.4 606.5,831.1 607.0,829.5 607.5,830.3 608.0,828.1 608.5,824.6 609.0,827.5 609.5,828.8 610.0,829.6 610.5,830.2 611.0,832.8 611.5,833.0 612.0,830.0 612.5,826.7 613.0,825.8 613.5,823.3 614.0,819.8 614.5,823.2 615.0,821.8 615.5,820.7 616.0,822.8 616.5,820.0 617.0,824.2 617.5,826.1 618.0,822.1 618.5,824.5 619.0,820.4 619.5,815.8 620.0,819.3 620.5,820.0 621.0,818.8 621.5,815.6 622.0,821.4 622.5,820.9 623.0,813.9 623.5,815.3 624.0,819.0 624.5,813.2 625.0,816.3 625.5,815.2 626.0,818.6 626.5,814.3 627.0,815.7 627.5,809.7 628.0,813.1 628.5,808.8 629.0,812.3 629.5,803.8 630.0,809.4 630.5,802.9 631.0,804.9 631.5,803.7 632.0,799.4 632.5,804.5 633.0,798.8 633.5,798.2 634.0,795.5 634.5,797.0 635.0,797.9 635.5,799.6 636.0,795.8 636.5,798.2 637.0,792.4 637.5,794.4 638.0,794.4 638.5,798.4 639.0,796.6 639.5,794.5 640.0,788.1 640.5,790.0 641.0,791.6 641.5,785.9 642.0,787.5 642.5,785.1 643.0,779.7 643.5,787.1 644.0,784.0 644.5,777.3 645.0,779.5 645.5,774.7 646.0,773.6 646.5,773.2 647.0,769.1 647.5,767.5 648.0,766.1 648.5,766.7 649.0,761.1 649.5,758.7 650.0,761.6 650.5,755.0 651.0,757.5 651.5,751.1 652.0,749.5 652.5,743.0 653.0,744.4 653.5,734.8 654.0,732.3 654.5,717.3 655.0,707.9 655.5,688.7 656.0,661.3 656.5,658.5 657.0,684.6 657.5,698.3 658.0,705.3 658.5,718.0 659.0,723.0 659.5,728.2 660.0,736.3 660.5,738.1 661.0,749.2 661.5,748.3 662.0,752.6 662.5,757.3 663.0,761.9 663.5,765.3 664.0,764.3 664.5,766.7 665.0,770.3 665.5,769.6 666.0,776.0 666.5,781.6 667.0,787.0 667.5,788.2 668.0,789.9 668.5,790.7 669.0,786.6 669.5,790.6 670.0,791.9 670.5,795.9 671.0,792.2 671.5,795.8 672.0,798.2 672.5,801.9 673.0,803.4 673.5,802.1 674.0,798.7 674.5,804.8 675.0,806.7 675.5,804.1 676.0,803.0 676.5,805.0 677.0,802.4 677.5,808.2 678.0,811.3 678.5,807.7 679.0,810.2 679.5,811.9 680.0,806.8 680.5,814.2 681.0,812.0 681.5,808.8 682.0,808.4 682.5,810.5 683.0,814.2 683.5,815.9 684.0,813.3 684.5,819.4 685.0,814.9 685.5,816.5 686.0,814.1 686.5,822.3 687.0,815.2 687.5,822.7 688.0,819.9 688.5,820.6 689.0,821.1 689.5,818.9 690.0,825.2 690.5,826.5 691.0,825.4 691.5,824.0 692.0,820.2 692.5,827.0 693.0,822.7 693.5,828.6 694.0,823.1 694.5,826.5 695.0,829.2 695.5,823.7 696.0,827.4 696.5,823.5 697.0,823.5 697.5,825.2 698.0,832.8 698.5,832.8 699.0,830.6 699.5,827.9 700.0,831.5 700.5,832.5 701.0,829.7 701.5,831.9 702.0,834.2 702.5,827.5 703.0,829.5 703.5,832.3 704.0,829.7 704.5,832.3 705.0,834.3 705.5,831.1 706.0,834.6 706.5,832.6 707.0,835.7 707.5,834.0 708.0,837.1 708.5,832.0 709.0,838.1 709.5,833.7 710.0,841.4 710.5,838.5 711.0,837.7 711.5,837.6 712.0,840.0 712.5,841.1 713.0,842.3 713.5,842.9 714.0,841.0 714.5,846.2 715.0,845.4 715.5,846.1 716.0,842.7 716.5,843.6 717.0,845.6 717.5,849.3 718.0,846.7 718.5,847.4 719.0,847.3 719.5,852.2 720.0,847.7 720.5,846.1 721.0,852.6 721.5,854.3 722.0,853.0 722.5,851.9 723.0,853.4 723.5,849.6 724.0,852.3 724.5,847.8 725.0,848.4 725.5,851.5 726.0,852.1 726.5,851.3 727.0,848.4 727.5,854.3 728.0,853.0 728.5,850.5 729.0,851.3 729.5,852.2 730.0,851.0 730.5,849.6 731.0,857.3 731.5,858.0 732.0,855.4 732.5,857.4 733.0,853.6 733.5,857.2 734.0,852.1 734.5,856.9 735.0,855.5 735.5,858.7 736.0,851.6 736.5,858.0 737.0,852.1 737.5,856.0 738.0,859.9 738.5,851.5 739.0,853.8 739.5,854.5 740.0,854.8 740.5,852.6 741.0,860.3 741.5,859.7 742.0,856.1 742.5,856.1 743.0,858.7 743.5,854.3 744.0,854.7 744.5,863.0 745.0,858.2 745.5,860.4 746.0,864.9 746.5,865.8 747.0,861.7 747.5,859.8 748.0,861.2 748.5,867.3 749.0,867.6 749.5,861.8 750.0,868.1 750.5,864.2 751.0,865.8 751.5,863.6 752.0,870.5 752.5,872.0 753.0,865.4 753.5,869.8 754.0,866.3 754.5,873.0 755.0,866.0 755.5,867.0 756.0,873.0 756.5,869.7 757.0,875.5 757.5,875.6 758.0,874.7 758.5,869.9 759.0,875.4 759.5,878.1 760.0,874.0 760.5,872.5 761.0,873.7 761.5,874.6 762.0,877.3 762.5,874.9 763.0,875.3 763.5,876.1 764.0,878.9 764.5,880.0 765.0,878.2 765.5,880.2 766.0,881.9 766.5,880.7 767.0,879.2 767.5,880.0 768.0,883.9 768.5,883.0 769.0,881.3 769.5,883.7 770.0,881.2 770.5,886.5 771.0,884.0 771.5,884.9 772.0,885.4 772.5,883.2 773.0,886.6 773.5,885.2 774.0,885.3 774.5,888.6 775.0,885.0 775.5,886.4 776.0,889.2 776.5,886.7 777.0,887.2 777.5,889.0 778.0,887.3 778.5,891.5 779.0,892.3 779.5,887.3 780.0,890.0 780.5,891.9 781.0,890.1 781.5,893.4 782.0,891.4 782.5,889.9 783.0,892.3 783.5,893.0 784.0,891.8 784.5,893.7 785.0,894.7 785.5,893.5 786.0,893.7 786.5,895.9 787.0,895.3 787.5,894.7 788.0,897.4 788.5,893.4 789.0,897.0 789.5,893.9 790.0,896.7 790.5,894.9 791.0,896.3 791.5,898.3 792.0,898.6 792.5,898.7 793.0,895.9 793.5,897.4 794.0,896.1 794.5,898.2 795.0,898.0 795.5,895.6 796.0,898.8 796.5,899.6 797.0,899.0 797.5,900.8 798.0,897.2 798.5,897.2 799.0,896.6 799.5,899.4 800.0,899.3 800.5,899.5 801.0,898.7 801.5,901.8 802.0,897.9 802.5,902.7 803.0,901.0 803.5,901.0 804.0,902.5 804.5,899.7 805.0,899.3 805.5,900.4 806.0,899.1 806.5,900.8 807.0,902.6 807.5,902.2 808.0,901.0 808.5,902.9 809.0,900.3 809.5,904.5 810.0,901.1 810.5,901.7 811.0,901.4 811.5,904.5 812.0,905.4 812.5,905.3 813.0,901.5 813.5,903.6 814.0,903.5 814.5,903.2 815.0,907.8 815.5,903.2 816.0,906.2 816.5,910.1 817.0,913.7 817.5,911.5 818.0,913.3 818.5,915.0 819.0,911.2 819.5,912.4 820.0,916.1 820.5,912.0 821.0,913.5 821.5,913.1 822.0,913.9 822.5,912.0 823.0,911.9 823.5,917.3 824.0,916.1 824.5,916.0 825.0,913.3 825.5,913.6 826.0,915.3 826.5,913.7 827.0,915.0 827.5,917.7 828.0,914.6 828.5,914.6 829.0,918.2 829.5,916.3 830.0,913.2 830.5,915.3 831.0,916.7 831.5,913.6 832.0,915.2 832.5,917.3 833.0,918.3 833.5,916.9 834.0,918.6 834.5,916.4 835.0,916.2 835.5,918.8 836.0,916.5 836.5,918.8 837.0,915.9 837.5,916.7 838.0,916.0 838.5,918.2 839.0,916.2 839.5,916.6 840.0,916.8 840.5,918.4 841.0,917.6 841.5,918.6 842.0,921.7 842.5,920.1 843.0,921.3 843.5,917.9 844.0,919.0 844.5,917.4 845.0,921.0 845.5,919.4 846.0,919.0 846.5,917.8 847.0,918.8 847.5,919.4 848.0,920.3 848.5,923.4 849.0,922.4 849.5,920.1 850.0,920.8 850.5,919.8 851.0,924.2 851.5,921.2 852.0,923.6 852.5,923.5 853.0,924.3 853.5,920.0 854.0,921.8 854.5,922.3 855.0,920.8 855.5,924.3 856.0,922.5 856.5,924.3 857.0,923.8 857.5,921.4 858.0,923.5 858.5,922.7 859.0,921.6 859.5,922.2 860.0,924.3 860.5,921.6 861.0,923.1 861.5,923.7 862.0,924.3 862.5,922.1 863.0,924.3 863.5,922.8 864.0,924.3 864.5,924.3 865.0,922.2 865.5,922.5 866.0,922.9 866.5,924.3 867.0,923.6 867.5,923.5 868.0,924.3 868.5,922.6 869.0,923.0 869.5,923.3 870.0,923.9 870.5,923.9 871.0,923.9 871.5,923.9 872.0,923.9 872.5,923.9 873.0,923.9 873.5,923.9 874.0,923.9 874.5,923.9 875.0,923.9 875.5,923.9 876.0,923.9 876.5,923.9 877.0,923.9 877.5,923.9 878.0,923.9 878.5,923.9 879.0,923.9 879.5,923.9 880.0,923.9 880.5,923.9 881.0,923.9 881.5,923.9 882.0,923.9 882.5,923.9 883.0,923.9 883.5,923.9 884.0,923.9 884.5,923.9 885.0,923.9 885.5,923.9 886.0,923.9 886.5,923.9 887.0,923.9 887.5,923.9 888.0,923.9 888.5,923.9 889.0,923.9 889.5,923.9 890.0,923.9 890.5,923.9 891.0,923.9 891.5,923.9 892.0,923.9 892.5,923.9 893.0,923.9 893.5,923.9 894.0,923.9 894.5,923.9 895.0,923.9 895.5,923.9 896.0,923.9 896.5,923.9 897.0,923.9 897.5,923.9 898.0,923.9 898.5,923.9 899.0,923.9 899.5,923.9 900.0,923.9 900.5,923.9 901.0,923.9 901.5,923.9 902.0,923.9 902.5,923.9 903.0,923.9 903.5,923.9 904.0,923.9 904.5,923.9 905.0,923.9 905.5,923.9 906.0,923.9 906.5,923.9 907.0,923.9 907.5,923.9 908.0,923.9 908.5,923.9 909.0,923.9 909.5,923.9 910.0,923.9 910.5,923.9 911.0,923.9 911.5,923.9 912.0,923.9 912.5,923.9 913.0,923.9 913.5,923.9 914.0,923.9 914.5,923.9 915.0,923.9 915.5,923.9 916.0,923.9 916.5,923.9 917.0,923.9 917.5,923.9 918.0,923.9 918.5,923.9 919.0,923.9 919.5,923.9 920.0,923.9 920.5,923.9 921.0,923.9 921.5,923.9 922.0,923.9 922.5,923.9 923.0,923.9 923.5,923.9 924.0,923.9 924.5,923.9 925.0,923.9 925.5,923.9 926.0,923.9 926.5,923.9 927.0,923.9 927.5,923.9 928.0,923.9 928.5,923.9 929.0,923.9 929.5,923.9 930.0,923.9 930.5,923.9 931.0,923.9 931.5,923.9 932.0,923.9 932.5,923.9 933.0,923.9 933.5,923.9 934.0,923.9 934.5,923.9 935.0,923.9 935.5,923.9 936.0,923.9 936.5,923.9 937.0,923.9 937.5,923.9 938.0,923.9 938.5,923.9 939.0,923.9 939.5,923.9 940.0,923.9 940.5,923.9 941.0,923.9 941.5,923.9 942.0,923.9 942.5,923.9 943.0,923.9 943.5,923.9 944.0,923.9 944.5,923.9 945.0,923.9 945.5,923.9 946.0,923.9 946.5,923.9 947.0,923.9 947.5,923.9 948.0,923.9 948.5,923.9 949.0,923.9 949.5,923.9 950.0,923.9 950.5,923.9 951.0,923.9 951.5,923.9 952.0,923.9 952.5,923.9 953.0,923.9 953.5,923.9 954.0,923.9 954.5,923.9 955.0,923.9 955.5,923.9 956.0,923.9 956.5,923.9 957.0,923.9 957.5,923.9 958.0,923.9 958.5,923.9 959.0,923.9 959.5,923.9 960.0,923.9 960.5,923.9 961.0,923.9 961.5,923.9 962.0,923.9 962.5,923.9 963.0,923.9 963.5,923.9 964.0,923.9 964.5,923.9 965.0,923.9 965.5,923.9 966.0,923.9 966.5,923.9 967.0,923.9 967.5,923.9 968.0,923.9 968.5,923.9 969.0,923.9 969.5,923.9 970.0,923.9 970.5,923.9 971.0,923.9 971.5,923.9 972.0,923.9 972.5,923.9 973.0,923.9 973.5,923.9 974.0,923.9 974.5,923.9 975.0,923.9 975.5,923.9 976.0,923.9 976.5,923.9 977.0,923.9 977.5,923.9 978.0,923.9 978.5,923.9 979.0,923.9 979.5,924.0 980.0,924.0 980.5,924.0 981.0,924.0 981.5,924.0 982.0,924.0 982.5,924.0 983.0,924.0 983.5,924.0 984.0,924.0 984.5,924.0 985.0,924.0 985.5,924.0 986.0,924.0 986.5,924.0 987.0,924.0 987.5,924.0 988.0,924.0 988.5,924.0 989.0,924.0 989.5,924.0 990.0,924.0 990.5,924.0 991.0,924.0 991.5,924.0 992.0,924.0 992.5,924.0 993.0,924.0 993.5,924.0 994.0,924.0 994.5,924.0 995.0,924.0 995.5,924.0 996.0,924.0 996.5,924.0 997.0,924.0 997.5,924.0 998.0,924.0 998.5,924.0 999.0,924.0 999.5,924.0 1000.0,924.0 1000.5,924.0 1001.0,924.0 1001.5,924.0 1002.0,924.0 1002.5,924.0 1003.0,924.0 1003.5,924.0 1004.0,924.0 1004.5,924.0 1005.0,924.0 1005.5,924.0 1006.0,924.0 1006.5,924.0 1007.0,924.0 1007.5,924.0 1008.0,924.0 1008.5,924.0 1009.0,924.0 1009.5,924.0 1010.0,924.0 1010.5,924.0 1011.0,924.0 1011.5,924.0 1012.0,924.0 1012.5,924.0 1013.0,924.0 1013.5,924.0 1014.0,924.0 1014.5,924.0 1015.0,924.0 1015.5,924.0 1016.0,924.0 1016.5,924.0 1017.0,924.0 1017.5,924.0 1018.0,924.0 1018.5,924.0 1019.0,924.0 1019.5,924.0 1020.0,924.0 1020.5,924.0 1021.0,924.0 1021.5,924.0 1022.0,924.0 1022.5,924.0 1023.0,924.0 1023.5,924.0 1024.0,924.0 1024.5,924.0 1025.0,924.0 1025.5,924.0 1026.0,924.0 1026.5,924.0 1027.0,924.0 1027.5,924.0 1028.0,924.0 1028.5,924.0 1029.0,924.0 1029.5,924.0 1030.0,924.0 1030.5,924.0 1031.0,924.0 1031.5,924.0 1032.0,924.0 1032.5,924.0 1033.0,924.0 1033.5,924.0 1034.0,924.0 1034.5,924.0 1035.0,924.0 1035.5,924.0 1036.0,924.0 1036.5,924.0 1037.0,924.0 1037.5,924.0 1038.0,924.0 1038.5,924.0 1039.0,924.0 1039.5,924.0 1040.0,924.0 1040.5,924.0 1041.0,924.0 1041.5,924.0 1042.0,924.0 1042.5,924.0 1043.0,924.0 1043.5,924.0 1044.0,924.0 1044.5,924.0 1045.0,924.0 1045.5,924.0 1046.0,924.0 1046.5,924.0 1047.0,924.0 1047.5,924.0 1048.0,924.0 1048.5,924.0 1049.0,924.0 1049.5,924.0 1050.0,924.0 1050.5,924.0 1051.0,924.0 1051.5,924.0 1052.0,924.0 1052.5,924.0 1053.0,924.0 1053.5,924.0 1054.0,924.0 1054.5,924.0 1055.0,924.0 1055.5,924.0 1056.0,924.0 1056.5,924.0 1057.0,924.0 1057.5,924.0 1058.0,924.0 1058.5,924.0 1059.0,924.0 1059.5,924.0 1060.0,924.0 1060.5,924.0 1061.0,924.0 1061.5,924.0 1062.0,924.0 1062.5,924.0 1063.0,924.0 1063.5,924.0 1064.0,924.0 1064.5,924.0 1065.0,924.0 1065.5,924.0 1066.0,924.0 1066.5,924.0 1067.0,924.0 1067.5,924.0 1068.0,924.0 1068.5,924.0 1069.0,924.0 1069.5,924.0 1070.0,924.0 1070.5,924.0 1071.0,924.0 1071.5,924.0 1072.0,924.0 1072.5,924.0 1073.0,924.0 1073.5,924.0 1074.0,924.0 1074.5,924.0 1075.0,924.0 1075.5,924.0 1076.0,924.0 1076.5,924.0 1077.0,924.0 1077.5,924.0 1078.0,924.0 1078.5,924.0 1079.0,924.0 1079.5,924.0 1080.0,924.0 1080.5,924.0 1081.0,924.0 1081.5,924.0 1082.0,924.0 1082.5,924.0 1083.0,924.0 1083.5,924.0 1084.0,924.0 1084.5,924.0 1085.0,924.0 1085.5,924.0 1086.0,924.0 1086.5,924.0 1087.0,924.0 1087.5,924.0 1088.0,924.0 1088.5,924.0 1089.0,924.0 1089.5,924.0 1090.0,924.0 1090.5,924.0 1091.0,924.0 1091.5,924.0 1092.0,924.0 1092.5,924.0 1093.0,924.0 1093.5,924.0 1094.0,924.0 1094.5,924.0 1095.0,924.0 1095.5,924.0 1096.0,924.0 1096.5,924.0 1097.0,924.0 1097.5,924.0 1098.0,924.0 1098.5,924.0 1099.0,924.0 1099.5,924.0 1100.0,924.0 1100.5,924.0 1101.0,924.0 1101.5,924.0 1102.0,924.0 1102.5,924.0 1103.0,924.0 1103.5,924.0 1104.0,924.0 1104.5,924.0 1105.0,924.0 1105.5,924.0 1106.0,924.0 1106.5,924.0 1107.0,924.0 1107.5,924.0 1108.0,924.0 1108.5,924.0 1109.0,924.0 1109.5,924.0 1110.0,924.0 1110.5,924.0 1111.0,924.0 1111.5,924.0 1112.0,924.0 1112.5,924.0 1113.0,924.0 1113.5,924.0 1114.0,924.0 1114.5,924.0 1115.0,924.0 1115.5,924.0 1116.0,924.0 1116.5,924.0 1117.0,924.0 1117.5,924.0 1118.0,924.0 1118.5,924.0 1119.0,924.0 1119.5,924.0 1120.0,924.0 1120.5,924.0 1121.0,924.0 1121.5,924.0 1122.0,924.0 1122.5,924.0 1123.0,924.0 1123.5,924.0 1124.0,924.0 1124.5,924.0 1125.0,924.0 1125.5,924.0 1126.0,924.0 1126.5,924.0 1127.0,924.0 1127.5,924.0 1128.0,924.0 1128.5,924.0 1129.0,924.0 1129.5,924.0 1130.0,924.0 1130.5,924.0 1131.0,924.0 1131.5,924.0 1132.0,924.0 1132.5,924.0 1133.0,924.0 1133.5,924.0 1134.0,924.0 1134.5,924.0 1135.0,924.0 1135.5,924.0 1136.0,924.0 1136.5,924.0 1137.0,924.0 1137.5,924.0 1138.0,924.0 1138.5,924.0 1139.0,924.0 1139.5,924.0 1140.0,924.0 1140.5,924.0 1141.0,924.0 1141.5,924.0 1142.0,924.0 1142.5,924.0 1143.0,924.0 1143.5,924.0 1144.0,924.0 1144.5,924.0 1145.0,924.0 1145.5,924.0 1146.0,924.0 1146.5,924.0 1147.0,924.0 1147.5,924.0 1148.0,924.0 1148.5,924.0 1149.0,924.0 1149.5,924.0 1150.0,924.0 1150.5,924.0 1151.0,924.0 1151.5,924.0 1152.0,924.0 1152.5,924.0 1153.0,924.0 1153.5,924.0 1154.0,924.0 1154.5,924.0 1155.0,924.0 1155.5,924.0 1156.0,924.0 1156.5,924.0 1157.0,924.0 1157.5,924.0 1158.0,924.0 1158.5,924.0 1159.0,924.0 1159.5,924.0 1160.0,924.0 1160.5,924.0 1161.0,924.0 1161.5,924.0 1162.0,924.0 1162.5,924.0 1163.0,924.0 1163.5,924.0 1164.0,924.0 1164.5,924.0 1165.0,924.0 1165.5,924.0 1166.0,924.0 1166.5,924.0 1167.0,924.0 1167.5,924.0 1168.0,924.0 1168.5,924.0 1169.0,924.0 1169.5,924.0 1170.0,924.0 1170.5,924.0 1171.0,924.0 1171.5,924.0 1172.0,924.0 1172.5,924.0 1173.0,924.0 1173.5,924.0 1174.0,924.0 1174.5,924.0 1175.0,924.0 1175.5,924.0 1176.0,924.0 1176.5,924.0 1177.0,924.0 1177.5,924.0 1178.0,924.0 1178.5,924.0 1179.0,924.0 1179.5,924.0 1180.0,924.0 1180.5,924.0 1181.0,924.0 1181.5,924.0 1182.0,924.0 1182.5,924.0 1183.0,924.0 1183.5,924.0 1184.0,924.0 1184.5,924.0 1185.0,924.0 1185.5,924.0 1186.0,924.0 1186.5,924.0 1187.0,924.0 1187.5,924.0 1188.0,924.0 1188.5,924.0 1189.0,924.0 1189.5,924.0 1190.0,924.0 1190.5,924.0 1191.0,924.0 1191.5,924.0 1192.0,924.0 1192.5,924.0 1193.0,924.0 1193.5,924.0 1194.0,924.0 1194.5,924.0 1195.0,924.0 1195.5,924.0 1196.0,924.0 1196.5,924.0 1197.0,924.0 1197.5,924.0 1198.0,924.0 1198.5,924.0 1199.0,924.0 1199.5,924.0 1200.0,924.0 1200.5,924.0 1201.0,924.0 1201.5,924.0 1202.0,924.0 1202.5,924.0 1203.0,924.0 1203.5,924.0 1204.0,924.0 1204.5,924.0 1205.0,924.0 1205.5,924.0 1206.0,924.0 1206.5,924.0 1207.0,924.0 1207.5,924.0 1208.0,924.0 1208.5,924.0 1209.0,924.0 1209.5,924.0 1210.0,924.0 1210.5,924.0 1211.0,924.0 1211.5,924.0 1212.0,924.0 1212.5,924.0 1213.0,924.0 1213.5,924.0 1214.0,924.0 1214.5,924.0 1215.0,924.0 1215.5,924.0 1216.0,924.0 1216.5,924.0 1217.0,924.0 1217.5,924.0 1218.0,924.0 1218.5,924.0 1219.0,924.0 1219.5,924.0 1220.0,924.0 1220.5,924.0 1221.0,924.0 1221.5,924.0 1222.0,924.1 1222.5,924.1 1223.0,924.1 1223.5,924.1 1224.0,924.1 1224.5,924.1 1225.0,924.1 1225.5,924.1 1226.0,924.1 1226.5,924.1 1227.0,924.1 1227.5,924.1 1228.0,924.1 1228.5,924.1 1229.0,924.1 1229.5,924.1 1230.0,924.1 1230.5,924.1 1231.0,924.1 1231.5,924.1 1232.0,924.1 1232.5,924.1 1233.0,924.1 1233.5,924.1 1234.0,924.1 1234.5,924.1 1235.0,924.1 1235.5,924.1 1236.0,924.1 1236.5,924.1 1237.0,924.1 1237.5,924.1 1238.0,924.1 1238.5,924.1 1239.0,924.1 1239.5,924.1 1240.0,924.1 1240.5,924.1 1241.0,924.1 1241.5,924.1 1242.0,924.1 1242.5,924.1 1243.0,924.1 1243.5,924.1 1244.0,924.1 1244.5,924.1 1245.0,924.1 1245.5,924.1 1246.0,924.1 1246.5,924.1 1247.0,924.1 1247.5,924.1 1248.0,924.1 1248.5,924.1 1249.0,924.1 1249.5,924.1 1250.0,924.1 1250.5,924.1 1251.0,924.1 1251.5,924.1 1252.0,924.1 1252.5,924.1 1253.0,924.1 1253.5,924.1 1254.0,924.1 1254.5,924.1 1255.0,924.1 1255.5,924.1 1256.0,924.1 1256.5,924.1 1257.0,924.1 1257.5,924.1 1258.0,924.1 1258.5,924.1 1259.0,924.1 1259.5,924.1 1260.0,924.1 1260.5,924.1 1261.0,924.1 1261.5,924.1 1262.0,924.1 1262.5,924.1 1263.0,924.1 1263.5,924.1 1264.0,924.1 1264.5,924.1 1265.0,924.1 1265.5,924.1 1266.0,924.1 1266.5,924.1 1267.0,924.1 1267.5,924.1 1268.0,924.1 1268.5,924.1 1269.0,924.1 1269.5,924.1 1270.0,924.1 1270.5,924.1 1271.0,924.1 1271.5,924.1 1272.0,924.1 1272.5,924.1 1273.0,924.1 1273.5,924.1 1274.0,924.1 1274.5,924.1 1275.0,924.1 1275.5,924.1 1276.0,924.1 1276.5,924.1 1277.0,924.1 1277.5,924.1 1278.0,924.1 1278.5,924.1 1279.0,924.1 1279.5,924.1 1280.0,924.1 1280.5,924.1 1281.0,924.1 1281.5,924.1 1282.0,924.1 1282.5,924.1 1283.0,924.1 1283.5,924.1 1284.0,924.1 1284.5,924.1 1285.0,924.1 1285.5,924.1 1286.0,924.1 1286.5,924.1 1287.0,924.1 1287.5,924.1 1288.0,924.1 1288.5,924.1 1289.0,924.1 1289.5,924.1 1290.0,924.1 1290.5,924.1 1291.0,924.1 1291.5,924.1 1292.0,924.1 1292.5,924.1 1293.0,924.1 1293.5,924.1 1294.0,924.1 1294.5,924.1 1295.0,924.1 1295.5,924.1 1296.0,924.1 1296.5,924.1 1297.0,924.1 1297.5,924.1 1298.0,924.1 1298.5,924.1 1299.0,924.1 1299.5,924.1 1300.0,924.1 1300.5,924.1 1301.0,924.1 1301.5,924.1 1302.0,924.1 1302.5,924.1 1303.0,924.1 1303.5,924.1 1304.0,924.1 1304.5,924.1 1305.0,924.1 1305.5,924.1 1306.0,924.1 1306.5,924.1 1307.0,924.1 1307.5,924.1 1308.0,924.1 1308.5,924.1 1309.0,924.1 1309.5,924.1 1310.0,924.1 1310.5,924.1 1311.0,924.1 1311.5,924.1 1312.0,924.1 1312.5,924.1 1313.0,924.1 1313.5,924.1 1314.0,924.1 1314.5,924.1 1315.0,924.1 1315.5,924.1 1316.0,924.1 1316.5,924.1 1317.0,924.1 1317.5,924.1 1318.0,924.1 1318.5,924.1 1319.0,924.1 1319.5,924.1 1320.0,924.1 1320.5,924.1 1321.0,924.1 1321.5,924.1 1322.0,924.1 1322.5,924.1 1323.0,924.1 1323.5,924.1 1324.0,924.1 1324.5,924.1 1325.0,924.1 1325.5,924.1 1326.0,924.1 1326.5,924.1 1327.0,924.1 1327.5,924.1 1328.0,924.1 1328.5,924.1 1329.0,924.1 1329.5,924.1 1330.0,924.1 1330.5,924.1 1331.0,924.1 1331.5,924.1 1332.0,924.1 1332.5,924.1 1333.0,924.1 1333.5,924.1 1334.0,924.1 1334.5,924.1 1335.0,924.1 1335.5,924.1 1336.0,924.1 1336.5,924.1 1337.0,924.1 1337.5,924.1 1338.0,924.1 1338.5,924.1 1339.0,924.1 1339.5,924.1 1340.0,924.1 1340.5,924.1 1341.0,924.1 1341.5,924.1 1342.0,924.1 1342.5,924.1 1343.0,924.1 1343.5,924.1 1344.0,924.1 1344.5,924.1 1345.0,924.1 1345.5,924.1 1346.0,924.1 1346.5,924.1 1347.0,924.1 1347.5,924.1 1348.0,924.1 1348.5,924.1 1349.0,924.1 1349.5,924.1 1350.0,924.1 1350.5,924.1 1351.0,924.1 1351.5,924.1 1352.0,924.1 1352.5,924.1 1353.0,924.1 1353.5,924.1 1354.0,924.1 1354.5,924.1 1355.0,924.1 1355.5,924.1 1356.0,924.1 1356.5,924.1 1357.0,924.1 1357.5,924.1 1358.0,924.1 1358.5,924.1 1359.0,924.1 1359.5,924.1 1360.0,924.1 1360.5,924.1 1361.0,924.1 1361.5,924.1 1362.0,924.1 1362.5,924.1 1363.0,924.1 1363.5,924.1 1364.0,924.1 1364.5,924.1 1365.0,924.1 1365.5,924.1 1366.0,924.1 1366.5,924.1 1367.0,924.1 1367.5,924.1 1368.0,924.1 1368.5,924.1 1369.0,924.1 1369.5,924.1 1370.0,924.1 1370.5,924.1 1371.0,924.1 1371.5,924.1 1372.0,924.1 1372.5,924.1 1373.0,924.1 1373.5,924.1 1374.0,924.1 1374.5,924.1 1375.0,924.1 1375.5,924.1 1376.0,924.1 1376.5,924.1 1377.0,924.1 1377.5,924.1 1378.0,924.1 1378.5,924.1 1379.0,924.1 1379.5,924.1 1380.0,924.1 1380.5,924.1 1381.0,924.1 1381.5,924.1 1382.0,924.1 1382.5,924.1 1383.0,924.1 1383.5,924.1 1384.0,924.1 1384.5,924.1 1385.0,924.1 1385.5,924.1 1386.0,924.1 1386.5,924.1 1387.0,924.1 1387.5,924.1 1388.0,924.1 1388.5,924.1 1389.0,924.1 1389.5,924.1 1390.0,924.1 1390.5,924.1 1391.0,924.1 1391.5,924.1 1392.0,924.1 1392.5,924.1 1393.0,924.1 1393.5,924.1 1394.0,924.1 1394.5,924.1 1395.0,924.1 1395.5,924.1 1396.0,924.1 1396.5,924.1 1397.0,924.1 1397.5,924.1 1398.0,924.1 1398.5,924.1 1399.0,924.1 1399.5,924.1 1400.0,924.1 1400.5,924.1 1401.0,924.1 1401.5,924.1 1402.0,924.1 1402.5,924.1 1403.0,924.1 1403.5,924.1 1404.0,924.1 1404.5,924.1 1405.0,924.1 1405.5,924.1 1406.0,924.1 1406.5,924.1 1407.0,924.1 1407.5,924.1 1408.0,924.1 1408.5,924.1 1409.0,924.1 1409.5,924.1 1410.0,924.1 1410.5,924.1 1411.0,924.1 1411.5,924.1 1412.0,924.1 1412.5,924.1 1413.0,924.1 1413.5,924.1 1414.0,924.1 1414.5,924.1 1415.0,924.1 1415.5,924.1 1416.0,924.1 1416.5,924.1 1417.0,924.1 1417.5,924.1 1418.0,924.1 1418.5,924.1 1419.0,924.1 1419.5,924.1 1420.0,924.1 1420.5,924.1 1421.0,924.1 1421.5,924.1 1422.0,924.1 1422.5,924.1 1423.0,924.1 1423.5,924.1 1424.0,924.1 1424.5,924.1 1425.0,924.1 1425.5,924.1 1426.0,924.1 1426.5,924.1 1427.0,924.1 1427.5,924.1 1428.0,924.1 1428.5,924.1 1429.0,924.1 1429.5,924.1 1430.0,924.1 1430.5,924.1 1431.0,924.1 1431.5,924.1 1432.0,924.1 1432.5,924.1 1433.0,924.1 1433.5,924.1 1434.0,924.1 1434.5,924.1 1435.0,924.1 1435.5,924.1 1436.0,924.1 1436.5,924.1 1437.0,924.1 1437.5,924.1 1438.0,924.1 1438.5,924.1 1439.0,924.1 1439.5,924.1 1440.0,924.1 1440.5,924.1 1441.0,924.1 1441.5,924.1 1442.0,924.1 1442.5,924.1 1443.0,924.1 1443.5,924.1 1444.0,924.1 1444.5,924.1 1445.0,924.1 1445.5,924.1 1446.0,924.1 1446.5,924.1 1447.0,924.1 1447.5,924.1 1448.0,924.1 1448.5,924.1 1449.0,924.1 1449.5,924.1 1450.0,924.1 1450.5,924.1 1451.0,924.1 1451.5,924.1 1452.0,924.1 1452.5,924.1 1453.0,924.1 1453.5,924.1 1454.0,924.1 1454.5,924.1 1455.0,924.1 1455.5,924.1 1456.0,924.1 1456.5,924.1 1457.0,924.1 1457.5,924.1 1458.0,924.1 1458.5,924.1 1459.0,924.1 1459.5,924.1 1460.0,924.1 1460.5,924.1 1461.0,924.1 1461.5,924.1 1462.0,924.1 1462.5,924.1 1463.0,924.1 1463.5,924.1 1464.0,924.1 1464.5,924.2 1465.0,924.2 1465.5,924.2 1466.0,924.2 1466.5,924.2 1467.0,924.2 1467.5,924.2 1468.0,924.2 1468.5,924.2 1469.0,924.2 1469.5,924.2 1470.0,924.2 1470.5,924.2 1471.0,924.2 1471.5,924.2 1472.0,924.2 1472.5,924.2 1473.0,924.2 1473.5,924.2 1474.0,924.2 1474.5,924.2 1475.0,924.2 1475.5,924.2 1476.0,924.2 1476.5,924.2 1477.0,924.2 1477.5,924.2 1478.0,924.2 1478.5,924.2 1479.0,924.2 1479.5,924.2 1480.0,924.2 1480.5,924.2 1481.0,924.2 1481.5,924.2 1482.0,924.2 1482.5,924.2 1483.0,924.2 1483.5,924.2 1484.0,924.2 1484.5,924.2 1485.0,924.2 1485.5,924.2 1486.0,924.2 1486.5,924.2 1487.0,924.2 1487.5,924.2 1488.0,924.2 1488.5,924.2 1489.0,924.2 1489.5,924.2 1490.0,924.2 1490.5,924.2 1491.0,924.2 1491.5,924.2 1492.0,924.2 1492.5,924.2 1493.0,924.2 1493.5,924.2 1494.0,924.2 1494.5,924.2 1495.0,924.2 1495.5,924.2 1496.0,924.2 1496.5,924.2 1497.0,924.2 1497.5,924.2 1498.0,924.2 1498.5,924.2 1499.0,924.2 1499.5,924.2 1500.0,924.2 1500.5,924.2 1501.0,924.2 1501.5,924.2 1502.0,924.2 1502.5,924.2 1503.0,924.2 1503.5,924.2 1504.0,924.2 1504.5,924.2 1505.0,924.2 1505.5,924.2 1506.0,924.2 1506.5,924.2 1507.0,924.2 1507.5,924.2 1508.0,924.2 1508.5,924.2 1509.0,924.2 1509.5,924.2 1510.0,924.2 1510.5,924.2 1511.0,924.2 1511.5,924.2 1512.0,924.2 1512.5,924.2 1513.0,924.2 1513.5,924.2 1514.0,924.2 1514.5,924.2 1515.0,924.2 1515.5,924.2 1516.0,924.2 1516.5,924.2 1517.0,924.2 1517.5,924.2 1518.0,924.2 1518.5,924.2 1519.0,924.2 1519.5,924.2 1520.0,924.2 1520.5,924.2 1521.0,924.2 1521.5,924.2 1522.0,924.2 1522.5,924.2 1523.0,924.2 1523.5,924.2 1524.0,924.2 1524.5,924.2 1525.0,924.2 1525.5,924.2 1526.0,924.2 1526.5,924.2 1527.0,924.2 1527.5,924.2 1528.0,924.2 1528.5,924.2 1529.0,924.2 1529.5,924.2 1530.0,924.2 1530.5,924.2 1531.0,924.2 1531.5,924.2 1532.0,924.2 1532.5,924.2 1533.0,924.2 1533.5,924.2 1534.0,924.2 1534.5,924.2 1535.0,924.2 1535.5,924.2 1536.0,924.2 1536.5,924.2 1537.0,924.2 1537.5,924.2 1538.0,924.2 1538.5,924.2 1539.0,924.2 1539.5,924.2 1540.0,924.2 1540.5,924.2 1541.0,924.2 1541.5,924.2 1542.0,924.2 1542.5,924.2 1543.0,924.2 1543.5,924.2 1544.0,924.2 1544.5,924.2 1545.0,924.2 1545.5,924.2 1546.0,924.2 1546.5,924.2 1547.0,924.2 1547.5,924.2 1548.0,924.2 1548.5,924.2 1549.0,924.2 1549.5,924.2 1550.0,924.2 1550.5,924.2 1551.0,924.2 1551.5,924.2 1552.0,924.2 1552.5,924.2 1553.0,924.2 1553.5,924.2 1554.0,924.2 1554.5,924.2 1555.0,924.2 1555.5,924.2 1556.0,924.2 1556.5,924.2 1557.0,924.2 1557.5,924.2 1558.0,924.2 1558.5,924.2 1559.0,924.2 1559.5,924.2 1560.0,924.2 1560.5,924.2 1561.0,924.2 1561.5,924.2 1562.0,924.2 1562.5,924.2 1563.0,924.2 1563.5,924.2 1564.0,924.2 1564.5,924.2 1565.0,924.2 1565.5,924.2 1566.0,924.2 1566.5,924.2 1567.0,924.2 1567.5,924.2 1568.0,924.2 1568.5,924.2 1569.0,924.2 1569.5,924.2 1570.0,924.2 1570.5,924.2 1571.0,924.2 1571.5,924.2 1572.0,924.2 1572.5,924.2 1573.0,924.2 1573.5,924.2 1574.0,924.2 1574.5,924.2 1575.0,924.2 1575.5,924.2 1576.0,924.2 1576.5,924.2 1577.0,924.2 1577.5,924.2 1578.0,924.2 1578.5,924.2 1579.0,924.2 1579.5,924.2 1580.0,924.2 1580.5,924.2 1581.0,924.2 1581.5,924.2 1582.0,924.2 1582.5,924.2 1583.0,924.2 1583.5,924.2 1584.0,924.2 1584.5,924.2 1585.0,924.2 1585.5,924.2 1586.0,924.2 1586.5,924.2 1587.0,924.2 1587.5,924.2 1588.0,924.2 1588.5,924.2 1589.0,924.2 1589.5,924.2 1590.0,924.2 1590.5,924.2 1591.0,924.2 1591.5,924.2 1592.0,924.2 1592.5,924.2 1593.0,924.2 1593.5,924.2 1594.0,924.2 1594.5,924.2 1595.0,924.2 1595.5,924.2 1596.0,924.2 1596.5,924.2 1597.0,924.2 1597.5,924.2 1598.0,924.2 1598.5,924.2 1599.0,924.2 1599.5,924.2 1600.0,924.2 1600.5,924.2 1601.0,924.2 1601.5,924.2 1602.0,924.2 1602.5,924.2 1603.0,924.2 1603.5,924.2 1604.0,924.2 1604.5,924.2 1605.0,924.2 1605.5,924.2 1606.0,924.2 1606.5,924.2 1607.0,924.2 1607.5,924.2 1608.0,924.2 1608.5,924.2 1609.0,924.2 1609.5,924.2 1610.0,924.2 1610.5,924.2 1611.0,924.2 1611.5,924.2 1612.0,924.2 1612.5,924.2 1613.0,924.2 1613.5,924.2 1614.0,924.2 1614.5,924.2 1615.0,924.2 1615.5,924.2 1616.0,924.2 1616.5,924.2 1617.0,924.2 1617.5,924.2 1618.0,924.2 1618.5,924.2 1619.0,924.2 1619.5,924.2 1620.0,924.2 1620.5,924.2 1621.0,924.2 1621.5,924.2 1622.0,924.2 1622.5,924.2 1623.0,924.2 1623.5,924.2 1624.0,924.2 1624.5,924.2 1625.0,924.2 1625.5,924.2 1626.0,924.2 1626.5,924.2 1627.0,924.2 1627.5,924.2 1628.0,924.2 1628.5,924.2 1629.0,924.2 1629.5,924.2 1630.0,924.2 1630.5,924.2 1631.0,924.2 1631.5,924.2 1632.0,924.2 1632.5,924.2 1633.0,924.2 1633.5,924.2 1634.0,924.2 1634.5,924.2 1635.0,924.2 1635.5,924.2 1636.0,924.2 1636.5,924.2 1637.0,924.2 1637.5,924.2 1638.0,924.2 1638.5,924.2 1639.0,924.2 1639.5,924.2 1640.0,924.2 1640.5,924.2 1641.0,924.2 1641.5,924.2 1642.0,924.2 1642.5,924.2 1643.0,924.2 1643.5,924.2 1644.0,924.2 1644.5,924.2 1645.0,924.2 1645.5,924.2 1646.0,924.2 1646.5,924.2 1647.0,924.2 1647.5,924.2 1648.0,924.2 1648.5,924.2 1649.0,924.2 1649.5,924.2 1650.0,924.2 1650.5,924.2 1651.0,924.2 1651.5,924.2 1652.0,924.2 1652.5,924.2 1653.0,924.2 1653.5,924.2 1654.0,924.2 1654.5,924.2 1655.0,924.2 1655.5,924.2 1656.0,924.2 1656.5,924.2 1657.0,924.2 1657.5,924.2 1658.0,924.2 1658.5,924.2 1659.0,924.2 1659.5,924.2 1660.0,924.2 1660.5,924.2 1661.0,924.2 1661.5,924.2 1662.0,924.2 1662.5,924.2 1663.0,924.2 1663.5,924.2 1664.0,924.2 1664.5,924.2 1665.0,924.2 1665.5,924.2 1666.0,924.2 1666.5,924.2 1667.0,924.2 1667.5,924.2 1668.0,924.2 1668.5,924.2 1669.0,924.2 1669.5,924.2 1670.0,924.2 1670.5,924.2 1671.0,924.2 1671.5,924.2 1672.0,924.2 1672.5,924.2 1673.0,924.2 1673.5,924.2 1674.0,924.2 1674.5,924.2 1675.0,924.2 1675.5,924.2 1676.0,924.2 1676.5,924.2 1677.0,924.2 1677.5,924.2 1678.0,924.2 1678.5,924.2 1679.0,924.2 1679.5,924.2 1680.0,924.2 1680.5,924.2 1681.0,924.2 1681.5,924.2 1682.0,924.2 1682.5,924.2 1683.0,924.2 1683.5,924.2 1684.0,924.2 1684.5,924.2 1685.0,924.2 1685.5,924.2 1686.0,924.2 1686.5,924.2 1687.0,924.2 1687.5,924.2 1688.0,924.2 1688.5,924.2 1689.0,924.2 1689.5,924.2 1690.0,924.2 1690.5,924.2 1691.0,924.2 1691.5,924.2 1692.0,924.2 1692.5,924.2 1693.0,924.2 1693.5,924.2 1694.0,924.2 1694.5,924.2 1695.0,924.2 1695.5,924.2 1696.0,924.2 1696.5,924.2 1697.0,924.2 1697.5,924.2 1698.0,924.2 1698.5,924.2 1699.0,924.2 1699.5,924.2 1700.0,924.2 1700.5,924.2 1701.0,924.2 1701.5,924.2 1702.0,924.2 1702.5,924.2 1703.0,924.2 1703.5,924.2 1704.0,924.2 1704.5,924.2 1705.0,924.2 1705.5,924.2 1706.0,924.2 1706.5,924.3 1707.0,924.3 1707.5,924.3 1708.0,924.3 1708.5,924.3 1709.0,924.3 1709.5,924.3 1710.0,924.3 1710.5,924.3 1711.0,924.3 1711.5,924.3 1712.0,924.3 1712.5,924.3 1713.0,924.3 1713.5,924.3 1714.0,924.3 1714.5,924.3 1715.0,924.3 1715.5,924.3 1716.0,924.3 1716.5,924.3 1717.0,924.3 1717.5,924.3 1718.0,924.3 1718.5,924.3 1719.0,924.3 1719.5,924.3 1720.0,924.3 1720.5,924.3 1721.0,924.3 1721.5,924.3 1722.0,924.3 1722.5,924.3 1723.0,924.3 1723.5,924.3 1724.0,924.3 1724.5,924.3 1725.0,924.3 1725.5,924.3 1726.0,924.3 1726.5,924.3 1727.0,924.3 1727.5,924.3 1728.0,924.3 1728.5,924.3 1729.0,924.3 1729.5,924.3 1730.0,924.3 1730.5,924.3 1731.0,924.3 1731.5,924.3 1732.0,924.3 1732.5,924.3 1733.0,924.3 1733.5,924.3 1734.0,924.3 1734.5,924.3 1735.0,924.3 1735.5,924.3 1736.0,924.3 1736.5,924.3 1737.0,924.3 1737.5,924.3 1738.0,924.3 1738.5,924.3 1739.0,924.3 1739.5,924.3 1740.0,924.3 1740.5,924.3 1741.0,924.3 1741.5,924.3 1742.0,924.3 1742.5,924.3 1743.0,924.3 1743.5,924.3 1744.0,924.3 1744.5,924.3 1745.0,924.3 1745.5,924.3 1746.0,924.3 1746.5,924.3 1747.0,924.3 1747.5,924.3 1748.0,924.3 1748.5,924.3 1749.0,924.3 1749.5,924.3 1750.0,924.3 1750.5,924.3 1751.0,924.3 1751.5,924.3 1752.0,924.3 1752.5,924.3 1753.0,924.3 1753.5,924.3 1754.0,924.3 1754.5,924.3 1755.0,924.3 1755.5,924.3 1756.0,924.3 1756.5,924.3 1757.0,924.3 1757.5,924.3 1758.0,924.3 1758.5,924.3 1759.0,924.3 1759.5,924.3 1760.0,924.3 1760.5,924.3 1761.0,924.3 1761.5,924.3 1762.0,924.3 1762.5,924.3 1763.0,924.3 1763.5,924.3 1764.0,924.3 1764.5,924.3 1765.0,924.3 1765.5,924.3 1766.0,924.3 1766.5,924.3 1767.0,924.3 1767.5,924.3 1768.0,924.3 1768.5,924.3 1769.0,924.3 1769.5,924.3 1770.0,924.3 1770.5,924.3 1771.0,924.3 1771.5,924.3 1772.0,924.3 1772.5,924.3 1773.0,924.3 1773.5,924.3 1774.0,924.3 1774.5,924.3 1775.0,924.3 1775.5,924.3 1776.0,924.3 1776.5,924.3 1777.0,924.3 1777.5,924.3 1778.0,924.3 1778.5,924.3 1779.0,924.3 1779.5,924.3 1780.0,924.3 1780.5,924.3 1781.0,924.3 1781.5,924.3 1782.0,924.3 1782.5,924.3 1783.0,924.3 1783.5,924.3 1784.0,924.3 1784.5,924.3 1785.0,924.3 1785.5,924.3 1786.0,924.3 1786.5,924.3 1787.0,924.3 1787.5,924.3 1788.0,924.3 1788.5,924.3 1789.0,924.3 1789.5,924.3 1790.0,924.3 1790.5,924.3 1791.0,924.3 1791.5,924.3 1792.0,924.3 1792.5,924.3 1793.0,924.3 1793.5,924.3 1794.0,924.3 1794.5,924.3 1795.0,924.3 1795.5,924.3 1796.0,924.3 1796.5,924.3 1797.0,924.3 1797.5,924.3 1798.0,924.3 1798.5,924.3 1799.0,924.3 1799.5,924.3 1800.0,924.3 1800.5,924.3 1801.0,924.3 1801.5,924.3 1802.0,924.3 1802.5,924.3 1803.0,924.3 1803.5,924.3 1804.0,924.3 1804.5,924.3 1805.0,924.3 1805.5,924.3 1806.0,924.3 1806.5,924.3 1807.0,924.3 1807.5,924.3 1808.0,924.3 1808.5,924.3 1809.0,924.3 1809.5,924.3 1810.0,924.3 1810.5,924.3 1811.0,924.3 1811.5,924.3 1812.0,924.3 1812.5,924.3 1813.0,924.3 1813.5,924.3 1814.0,924.3 1814.5,924.3 1815.0,924.3 1815.5,924.3 1816.0,924.3 1816.5,924.3 1817.0,924.3 1817.5,924.3 1818.0,924.3 1818.5,924.3 1819.0,924.3 1819.5,924.3 1820.0,924.3 1820.5,924.3 1821.0,924.3 1821.5,924.3 1822.0,924.3 1822.5,924.3 1823.0,924.3 1823.5,924.3 1824.0,924.3 1824.5,924.3 1825.0,924.3 1825.5,924.3 1826.0,924.3 1826.5,924.3 1827.0,924.3 1827.5,924.3 1827.5,925.25" fill="#c0f5f4"/>
<path d="M517.8,834.5V880M574.2,832.5V880M523.9,830.5V880M594.9,823.6V880M558.6,823.6V880M498.4,830.4V880M568.2,806.7V880M593.3,826.1V880M525.9,825.0V880M617.7,826.9V880M603.0,818.0V880M502.1,830.8V880M557.7,819.1V880M612.2,827.5V880M516.6,829.5V880M513.0,834.9V880M552.4,819.3V880M539.2,824.4V880M520.4,823.6V880M601.9,815.0V880M591.6,815.5V880M614.3,818.5V880M588.6,818.9V880M567.7,833.2V880M512.7,832.2V880M597.2,815.6V880M608.8,819.0V880M547.2,830.2V880M552.2,818.3V880M617.4,822.5V880M501.2,822.6V880M584.2,823.6V880M557.5,821.4V880M564.1,829.1V880M524.6,827.1V880M564.8,816.1V880M519.7,832.6V880M539.8,823.0V880M539.6,821.0V880M534.8,829.4V880M505.9,819.6V880M591.2,833.3V880M580.0,827.1V880M605.8,825.1V880M546.8,821.2V880M613.4,827.0V880M604.0,833.3V880M543.1,822.8V880M603.1,815.3V880M506.3,830.0V880M590.9,830.5V880M598.4,817.5V880M529.0,832.1V880M548.3,827.5V880M506.3,827.2V880M605.9,825.2V880M587.5,833.6V880M528.3,831.7V880M561.1,833.5V880M501.4,823.3V880M598.6,829.8V880M603.8,834.0V880M549.1,817.2V880M599.9,822.4V880M562.1,820.0V880M590.2,817.3V880M580.2,828.7V880M500.8,832.4V880M575.3,818.5V880M568.1,807.8V880M546.7,821.0V880M606.7,825.9V880M509.4,830.3V880M501.0,824.7V880M514.9,829.3V880M576.6,826.1V880M562.6,833.9V880M557.3,817.2V880M517.9,831.5V880M543.3,825.5V880M564.0,824.9V880M583.3,827.8V880M590.9,832.3V880M498.9,834.4V880M505.6,819.3V880M519.0,818.9V880M528.3,830.1V880M535.6,826.4V880M544.7,833.5V880M606.1,817.7V880" stroke="#b5ecea" stroke-width="1" opacity="0.8"/>
<path d="M558.4,851.0V917.4M509.8,852.0V895.4M586.1,859.3V885.5M581.9,850.5V898.0M505.6,856.3V918.8M540.6,846.4V919.7M510.9,841.5V873.7M595.7,855.2V892.4M572.6,840.4V902.2M551.1,850.3V889.5M546.2,844.5V872.4M550.1,844.9V905.2M596.1,854.5V892.8M526.4,847.7V894.3M573.8,859.3V874.3M555.6,849.8V905.9M604.9,855.6V901.3M589.0,853.4V912.9M581.9,853.7V882.3M608.0,847.7V900.7M597.0,859.3V919.5M498.8,846.3V885.6M544.9,842.9V897.7M507.5,846.1V917.2M587.1,849.2V875.4" stroke="#6a9a98" stroke-width="0.9" opacity="0.5"/>
<path d="M518.1,835.0 L518.1,789.0 L518.8,786.0 L519.5,789.0 L519.5,835.0 Z" fill="#9fd2d0"/>
<path d="M539.6,835.0 L539.6,806.7 L540.2,803.7 L540.9,806.7 L540.9,835.0 Z" fill="#9fd2d0"/>
<path d="M549.1,835.0 L549.1,741.5 L549.9,738.5 L550.7,741.5 L550.7,835.0 Z" fill="#9fd2d0"/>
<path d="M593.1,835.0 L593.1,802.8 L593.7,799.8 L594.4,802.8 L594.4,835.0 Z" fill="#9fd2d0"/>
<path d="M603.0,835.0 L603.0,732.7 L603.8,729.7 L604.6,732.7 L604.6,835.0 Z" fill="#9fd2d0"/>
<path d="M655.5,700.0 L655.5,623.0 L656.3,620.0 L657.1,623.0 L657.1,700.0 Z" fill="#9fd2d0"/>
<path d="M709.1,842.6 L709.1,806.0 L709.8,803.0 L710.4,806.0 L710.4,842.6 Z" fill="#9fd2d0"/>
<path d="M815.5,913.0 L815.5,887.0 L816.2,884.0 L816.9,887.0 L816.9,913.0 Z" fill="#9fd2d0"/>
<path d="M544.5,850 L548.5,795 L550,768 L551.5,795 L555.5,850 Z" fill="#b8eeec"/>
<path d="M598,850 L602,808 L603.8,790 L605.5,808 L609.5,850 Z" fill="#b8eeec"/>
<line x1="496.5" y1="924.5" x2="1827.5" y2="924.5" stroke="#9fd0d0" stroke-width="1.2"/>
<rect x="1909" y="1000" width="3" height="3" fill="#454545"/>
<rect x="1904" y="1005" width="3" height="3" fill="#454545"/>
<rect x="1909" y="1005" width="3" height="3" fill="#454545"/>
<rect x="1899" y="1010" width="3" height="3" fill="#454545"/>
<rect x="1904" y="1010" width="3" height="3" fill="#454545"/>
<rect x="1909" y="1010" width="3" height="3" fill="#454545"/>
</svg>
<div class="a" style="left:0;top:1020px;width:1920px;height:60px;background:linear-gradient(90deg,#edd8e3 0px,#ecd9e5 140px,#e3dcec 152px,#d3e5f0 170px,#d3e6f0 270px,#e3dcea 292px,#f3dadd 315px,#f4dadb 430px,#ead8e3 480px,#e9d6e9 580px,#e8d8e8 690px,#dedae7 760px,#dcd9e6 950px,#e1d9e9 1100px,#dfe2f0 1220px,#e5ddee 1290px,#f0d8ee 1380px,#f3d8f0 1600px,#f1d8f0 1720px,#ebd6ee 1920px);"></div>
<div class="a" style="left:0;top:1020px;width:1920px;height:1px;background:#c8bcc6;opacity:0.6"></div>
<svg class="a" style="left:0;top:0" width="1920" height="1080" viewBox="0 0 1920 1080">
<defs><linearGradient id="cloud" x1="0" y1="0" x2="0" y2="1"><stop offset="0" stop-color="#b9d4fb"/><stop offset="0.7" stop-color="#a8c8f7"/><stop offset="1" stop-color="#5e8ee6"/></linearGradient><linearGradient id="moon" x1="0" y1="0" x2="0" y2="1"><stop offset="0" stop-color="#f7c23a"/><stop offset="1" stop-color="#ef8a12"/></linearGradient><linearGradient id="win" x1="0" y1="0" x2="1" y2="1"><stop offset="0" stop-color="#52cffa"/><stop offset="1" stop-color="#0a6fd6"/></linearGradient><linearGradient id="cop" x1="0" y1="0" x2="1" y2="1"><stop offset="0" stop-color="#2aa5f5"/><stop offset="0.4" stop-color="#5fd36a"/><stop offset="0.6" stop-color="#f5a623"/><stop offset="1" stop-color="#c84fe0"/></linearGradient><linearGradient id="edge" x1="0" y1="0" x2="1" y2="1"><stop offset="0" stop-color="#35c1f1"/><stop offset="0.6" stop-color="#1f8fdc"/><stop offset="1" stop-color="#58d468"/></linearGradient><linearGradient id="fold" x1="0" y1="0" x2="0" y2="1"><stop offset="0" stop-color="#ffd766"/><stop offset="1" stop-color="#f4b519"/></linearGradient><linearGradient id="opera" x1="0" y1="0" x2="0" y2="1"><stop offset="0" stop-color="#ff1b2d"/><stop offset="1" stop-color="#b7081d"/></linearGradient></defs>
<path d="M36,1033.8 A9.2,9.2 0 1 1 25,1047.5 A11,11 0 0 0 36,1033.8 Z" fill="url(#moon)"/>
<path d="M30,1063 C25,1063 24,1054 30,1053 C30.5,1045.5 41,1042 44.5,1050 C50,1048 55.5,1052 54.7,1057.5 C54.7,1061 52.5,1063 50,1063 Z" fill="url(#cloud)"/>
<text x="64.5" y="1044.8" font-size="14.5" fill="#1c1c1c" font-weight="normal" letter-spacing="0" text-anchor="start" >7°C</text>
<text x="63.8" y="1064.7" font-size="14.5" fill="#505050" font-weight="normal" letter-spacing="0.55" text-anchor="start" >Mostly cloudy</text>
<g><rect x="530" y="1036" width="14" height="14" rx="1.5" fill="url(#win)"/><rect x="545" y="1036" width="14" height="14" rx="1.5" fill="url(#win)"/><rect x="530" y="1051" width="14" height="14" rx="1.5" fill="url(#win)"/><rect x="545" y="1051" width="14" height="14" rx="1.5" fill="url(#win)"/></g>
<rect x="577" y="1031" width="272.5" height="38.5" rx="19.25" fill="#f7f1f7" stroke="#d9cfd9" stroke-width="1"/>
<circle cx="599" cy="1048.5" r="6.6" fill="none" stroke="#222" stroke-width="1.9"/><line x1="603.8" y1="1053.3" x2="608.5" y2="1058" stroke="#222" stroke-width="2.2" stroke-linecap="round"/>
<text x="622.5" y="1057" font-size="17.5" fill="#5c5c5c" font-weight="normal" letter-spacing="0.3" text-anchor="start" >Поиск</text>
<defs><radialGradient id="wglow" cx="0.5" cy="0.5" r="0.5"><stop offset="0.6" stop-color="#8a90d8"/><stop offset="0.85" stop-color="#b8b4e4"/><stop offset="1" stop-color="#f2eef8" stop-opacity="0"/></radialGradient><linearGradient id="aur" x1="0" y1="0" x2="0" y2="1"><stop offset="0" stop-color="#50e8a8" stop-opacity="0.3"/><stop offset="0.5" stop-color="#40e0b0"/><stop offset="1" stop-color="#3a68b0"/></linearGradient></defs>
<ellipse cx="814.3" cy="1051.3" rx="32" ry="16" fill="url(#wglow)"/><ellipse cx="815" cy="1049" rx="25" ry="11.5" fill="#6a82c8"/><rect x="793.0" y="1040.5" width="1.4" height="10.0" fill="#48e0a8" opacity="0.55"/><rect x="795.1" y="1040.2" width="1.4" height="10.2" fill="#48e0a8" opacity="0.75"/><rect x="797.2" y="1039.8" width="1.4" height="10.4" fill="#48e0a8" opacity="0.95"/><rect x="799.3" y="1039.5" width="1.4" height="10.6" fill="#48e0a8" opacity="0.55"/><rect x="801.4" y="1039.1" width="1.4" height="10.8" fill="#48e0a8" opacity="0.75"/><rect x="803.5" y="1038.8" width="1.4" height="11.0" fill="#48e0a8" opacity="0.95"/><rect x="805.6" y="1038.4" width="1.4" height="11.2" fill="#48e0a8" opacity="0.55"/><rect x="807.7" y="1038.0" width="1.4" height="11.4" fill="#48e0a8" opacity="0.75"/><rect x="809.8" y="1037.7" width="1.4" height="11.6" fill="#48e0a8" opacity="0.95"/><rect x="811.9" y="1037.3" width="1.4" height="11.8" fill="#48e0a8" opacity="0.55"/><rect x="814.0" y="1037.0" width="1.4" height="12.0" fill="#48e0a8" opacity="0.75"/><rect x="816.1" y="1037.3" width="1.4" height="11.8" fill="#48e0a8" opacity="0.95"/><rect x="818.2" y="1037.7" width="1.4" height="11.6" fill="#48e0a8" opacity="0.55"/><rect x="820.3" y="1038.0" width="1.4" height="11.4" fill="#48e0a8" opacity="0.75"/><rect x="822.4" y="1038.4" width="1.4" height="11.2" fill="#48e0a8" opacity="0.95"/><rect x="824.5" y="1038.8" width="1.4" height="11.0" fill="#48e0a8" opacity="0.55"/><rect x="826.6" y="1039.1" width="1.4" height="10.8" fill="#48e0a8" opacity="0.75"/><rect x="828.7" y="1039.5" width="1.4" height="10.6" fill="#48e0a8" opacity="0.95"/><rect x="830.8" y="1039.8" width="1.4" height="10.4" fill="#48e0a8" opacity="0.55"/><rect x="832.9" y="1040.2" width="1.4" height="10.2" fill="#48e0a8" opacity="0.75"/><rect x="835.0" y="1040.5" width="1.4" height="10.0" fill="#48e0a8" opacity="0.95"/><path d="M793,1051 L800,1046 L808,1044 L815,1046.5 L824,1047 L832,1050 L838,1052 L838,1057 L793,1057 Z" fill="#3a5eaa"/><ellipse cx="813" cy="1061.5" rx="27" ry="5.5" fill="#e6f1ff"/><ellipse cx="799" cy="1062" rx="14" ry="4.5" fill="#d6e8fc"/><rect x="793" y="1051" width="18" height="10" fill="#8c5a3c"/><rect x="801" y="1051" width="10" height="10" fill="#a06a44"/><rect x="794.5" y="1051.8" width="6" height="2" fill="#f3d58a"/><rect x="803" y="1051.8" width="6.5" height="2" fill="#f3d58a"/><path d="M802.6,1037 L807,1046.5 L813.5,1051.3 L791.3,1051.3 L798.2,1046.5 Z" fill="#a8bce6"/><path d="M802.6,1037 L802.6,1051.3 L791.3,1051.3 L798.2,1046.5 Z" fill="#5a68ac"/><path d="M802.2,1057.5 L812,1053.3 L817.5,1057.5 Z" fill="#f2b43e"/><path d="M802.2,1057.5 L812,1053.3 L809,1057.5 Z" fill="#cfe0f8"/><rect x="806.5" y="1057.5" width="1.5" height="4.5" fill="#e0784a"/><rect x="815" y="1057.5" width="1.5" height="4.5" fill="#e0784a"/><rect x="803" y="1057.5" width="4" height="4" fill="#c88048"/><path d="M834,1040.4 L837,1047 L835.8,1047 L839.4,1054 L837.5,1054 L840,1060 L828,1060 L830.5,1054 L828.6,1054 L832.2,1047 L831,1047 Z" fill="#ecebf8"/><path d="M834,1044 L836,1052 L832,1052 Z" fill="#8888a8" opacity="0.6"/><circle cx="831.5" cy="1052" r="0.8" fill="#f0c050"/><circle cx="836.5" cy="1049" r="0.8" fill="#f0c050"/><circle cx="838" cy="1057" r="0.8" fill="#f0c050"/><circle cx="830" cy="1058" r="0.8" fill="#f0c050"/><rect x="833.2" y="1059.5" width="1.8" height="4.2" fill="#5a4030"/><ellipse cx="834" cy="1064" rx="6" ry="1.5" fill="#f6dc90" opacity="0.6"/><ellipse cx="812" cy="1063" rx="7" ry="1.5" fill="#f6dc90" opacity="0.5"/>
<rect x="866" y="1043.7" width="22.5" height="20.3" rx="2" fill="#2a2a2a"/><rect x="873.6" y="1035.5" width="22.3" height="19.7" rx="2" fill="#f2f2f2" opacity="0.92"/><rect x="873.6" y="1043.7" width="14.9" height="11.5" fill="#b8b8b8"/>
<defs><linearGradient id="copL" x1="0" y1="0" x2="0" y2="1"><stop offset="0" stop-color="#25b4fa"/><stop offset="0.35" stop-color="#1d98e0"/><stop offset="0.65" stop-color="#56b060"/><stop offset="1" stop-color="#f2d000"/></linearGradient><linearGradient id="copR" x1="0" y1="0" x2="0" y2="1"><stop offset="0" stop-color="#c050f2"/><stop offset="0.45" stop-color="#f05598"/><stop offset="1" stop-color="#ffa858"/></linearGradient></defs>
<path d="M937,1036 H940 C942.5,1036 943.5,1038 944.5,1040.5 L945.8,1043.6 H939 Z" fill="#1a4fd2"/><path d="M928,1054 H935.5 L934.7,1062.7 H932.5 C930.8,1062.7 929.8,1061.5 929.2,1060 Z" fill="#f25a30"/><path d="M929,1036 H940 L931.8,1054.8 H924.6 C922.6,1054.8 921.6,1053 922.2,1051 L926,1038.5 C926.5,1036.8 927.5,1036 929,1036 Z" fill="url(#copL)"/><path d="M940.3,1043.4 H948 C950,1043.4 951,1045 950.5,1047 L946.5,1060 C946,1061.8 945,1062.7 943,1062.7 H934.7 Z" fill="url(#copR)"/>
<circle cx="993" cy="1041.5" r="4.6" fill="#7b83eb"/><circle cx="1002" cy="1043" r="3.6" fill="#5059c9"/><rect x="984" y="1048" width="15" height="14.5" rx="6" fill="#7b83eb"/><rect x="997" y="1048.5" width="8.6" height="12" rx="4" fill="#5059c9"/><rect x="975.8" y="1042" width="15.8" height="15.8" rx="1.5" fill="#4b53bc"/><text x="983.7" y="1055" font-size="12" font-weight="bold" fill="#fff" text-anchor="middle">T</text>
<defs><linearGradient id="edgeT" x1="0" y1="0" x2="1" y2="0.3"><stop offset="0" stop-color="#3ab8f2"/><stop offset="0.5" stop-color="#2ec4cc"/><stop offset="1" stop-color="#5cde50"/></linearGradient></defs>
<circle cx="1046" cy="1049.9" r="15.1" fill="url(#edgeT)"/><path d="M1047,1054.6 C1052,1055.2 1058,1054.8 1061.6,1052.5 L1063,1067 L1046,1067 Z" fill="#e2dbec"/><path d="M1031,1047 C1033,1041 1039,1039 1044,1040.5 C1047.5,1041.8 1049,1044.5 1049.3,1046.8 C1046,1045.5 1042,1047 1040.5,1051 C1039,1056 1041,1062 1047,1065 C1038,1065.5 1030.5,1058 1031,1047 Z" fill="#138ce0"/><circle cx="1045.9" cy="1050.6" r="3.4" fill="#e2dbec"/><path d="M1040.5,1051 C1041.5,1047 1044.5,1045.5 1047.5,1046.3 C1044.5,1047 1042.5,1049.5 1043.5,1052.5 C1045,1056.5 1051,1058.5 1059,1057.3 C1056,1062 1051.5,1065 1046.5,1065 C1041,1062.5 1039,1056 1040.5,1051 Z" fill="#0f55a6"/>
<ellipse cx="1100.8" cy="1049.9" rx="14.3" ry="14.4" fill="url(#opera)"/><ellipse cx="1100.8" cy="1049.9" rx="5.6" ry="10.6" fill="#e8ddea"/>
<path d="M1141,1039 a2,2 0 0 1 2,-2 h8 l3,2.6 h15 a2,2 0 0 1 2,2 v20 a2,2 0 0 1 -2,2 h-26 a2,2 0 0 1 -2,-2 Z" fill="#e5a50a"/><rect x="1141" y="1040.6" width="30" height="22.7" rx="2" fill="url(#fold)"/><rect x="1147" y="1055" width="18" height="8.3" rx="2" fill="#1f7fd0"/><rect x="1150.5" y="1058" width="11" height="1.2" fill="#0d4f99"/>
<path d="M1203,1043 L1213,1037 L1226.3,1043.5 V1061 a2,2 0 0 1 -2,2 H1205 a2,2 0 0 1 -2,-2 Z" fill="#1490df"/><path d="M1203,1050 L1226.3,1043.5 V1061 a2,2 0 0 1 -2,2 H1205 a2,2 0 0 1 -2,-2 Z" fill="#50d9ff" opacity="0.8"/><rect x="1196" y="1043" width="15.5" height="15.5" rx="1.5" fill="#0f6cbd"/><ellipse cx="1203.7" cy="1050.8" rx="4" ry="4.8" fill="none" stroke="#fff" stroke-width="2"/>
<circle cx="1266" cy="1050" r="15" fill="#2ea44f"/><path d="M1266,1050 L1253.01,1042.5 A15,15 0 0 1 1278.99,1042.5 Z" fill="#db4437"/><path d="M1266,1050 L1278.99,1042.5 A15,15 0 0 1 1266,1065 Z" fill="#fcc934"/><path d="M1266,1050 L1253.01,1042.5 L1260,1050 Z" fill="#db4437"/><circle cx="1266" cy="1050" r="6.8" fill="#fff"/><circle cx="1266" cy="1050" r="5.4" fill="#3b7ff0"/>
<rect x="1262" y="1070.3" width="8" height="3.5" rx="1.75" fill="#8a8490"/>
<path d="M1320.5,1035.5 A13.5,13.5 0 0 1 1334,1049 h-4.5 A9,9 0 0 0 1320.5,1040 Z" fill="#f2401f"/><path d="M1334,1050 A13.5,13.5 0 0 1 1320.5,1063.5 v-4.5 A9,9 0 0 0 1329.5,1050 Z" fill="#aaaaaa"/><path d="M1319.5,1063.5 A13.5,13.5 0 0 1 1306,1050 h4.5 A9,9 0 0 0 1319.5,1059 Z" fill="#aaaaaa"/><path d="M1319,1035.5 C1310,1037 1313,1052 1306.5,1055 L1310,1058 C1316,1054 1314,1041 1319,1040 Z" fill="#7a7a7a"/><text x="1321" y="1065" font-size="4.5" fill="#777" text-anchor="middle" font-weight="bold">PHOTOSCAPE</text>
<rect x="1317" y="1070.3" width="8" height="3.5" rx="1.75" fill="#8a8490"/>
<rect x="1352" y="1026.2" width="47.8" height="47.8" rx="4" fill="#f8ecf7" stroke="#e8d6e8" stroke-width="0.8"/>
<rect x="1362.3" y="1041.7" width="25.8" height="15.9" fill="#2f6ee0"/><rect x="1365.5" y="1045" width="19" height="9.5" fill="none" stroke="#cfe0fb" stroke-width="1.4"/>
<polyline points="1361.9,1049.7 1374,1049.7 1376.9,1038.4 1382.5,1058.6 1385.3,1049.7 1389,1049.7" fill="none" stroke="#111" stroke-width="1.5" stroke-linejoin="round"/>
<rect x="1366" y="1070" width="19.8" height="3.75" rx="1.8" fill="#1f8a96"/>
<polyline points="1601.5,1053.5 1608,1047 1614.5,1053.5" fill="none" stroke="#1c1c1c" stroke-width="1.6"/>
<text x="1642" y="1055.6" font-size="14" fill="#1c1c1c" font-weight="normal" letter-spacing="0" text-anchor="start" >ENG</text>
<path d="M1693.5,1047.5 A13.5,13.5 0 0 1 1712.5,1047.5" fill="none" stroke="#1c1c1c" stroke-width="1.5"/><path d="M1696.5,1050.5 A9.3,9.3 0 0 1 1709.5,1050.5" fill="none" stroke="#1c1c1c" stroke-width="1.5"/><path d="M1699.5,1053.3 A5,5 0 0 1 1706.5,1053.3" fill="none" stroke="#1c1c1c" stroke-width="1.5"/><circle cx="1703" cy="1055.8" r="1.3" fill="#1c1c1c"/>
<path d="M1723.5,1047 h3.5 l5,-3.5 v12.5 l-5,-3.5 h-3.5 Z" fill="none" stroke="#1c1c1c" stroke-width="1.3" stroke-linejoin="round"/><path d="M1735,1047 q2,2.8 0,5.6 M1737.8,1045 q3.6,4.8 0,9.6" fill="none" stroke="#1c1c1c" stroke-width="1.3"/><path d="M1740.5,1043.5 q4.8,6.3 0,12.6" fill="none" stroke="#bbb" stroke-width="1.1"/>
<rect x="1754" y="1045" width="16.5" height="10" rx="1.8" fill="none" stroke="#1c1c1c" stroke-width="1.4"/><rect x="1756" y="1047" width="12.5" height="6" fill="#1c1c1c"/><rect x="1771" y="1048" width="2" height="4" rx="0.6" fill="#1c1c1c"/><path d="M1758,1040.5 L1755,1046 L1758.5,1046 L1756,1051" fill="none" stroke="#1c1c1c" stroke-width="1.2"/>
<text x="1865.5" y="1045" font-size="14.5" fill="#1c1c1c" font-weight="normal" letter-spacing="0.1" text-anchor="end" >17:44</text>
<text x="1865.5" y="1065" font-size="14.5" fill="#1c1c1c" font-weight="normal" letter-spacing="-0.05" text-anchor="end" >20.12.2024</text>
<path d="M1878,1055 C1880,1053 1879.5,1048 1880.5,1045.5 C1881.5,1042.5 1883.5,1041.6 1885,1041.6 C1886.5,1041.6 1888.5,1042.5 1889.5,1045.5 C1890.5,1048 1890,1053 1892,1055 Z" fill="none" stroke="#1c1c1c" stroke-width="1.4" stroke-linejoin="round"/><path d="M1882.5,1056.5 a2.5,2.5 0 0 0 5,0" fill="none" stroke="#1c1c1c" stroke-width="1.3"/>
</svg>
</body></html>
